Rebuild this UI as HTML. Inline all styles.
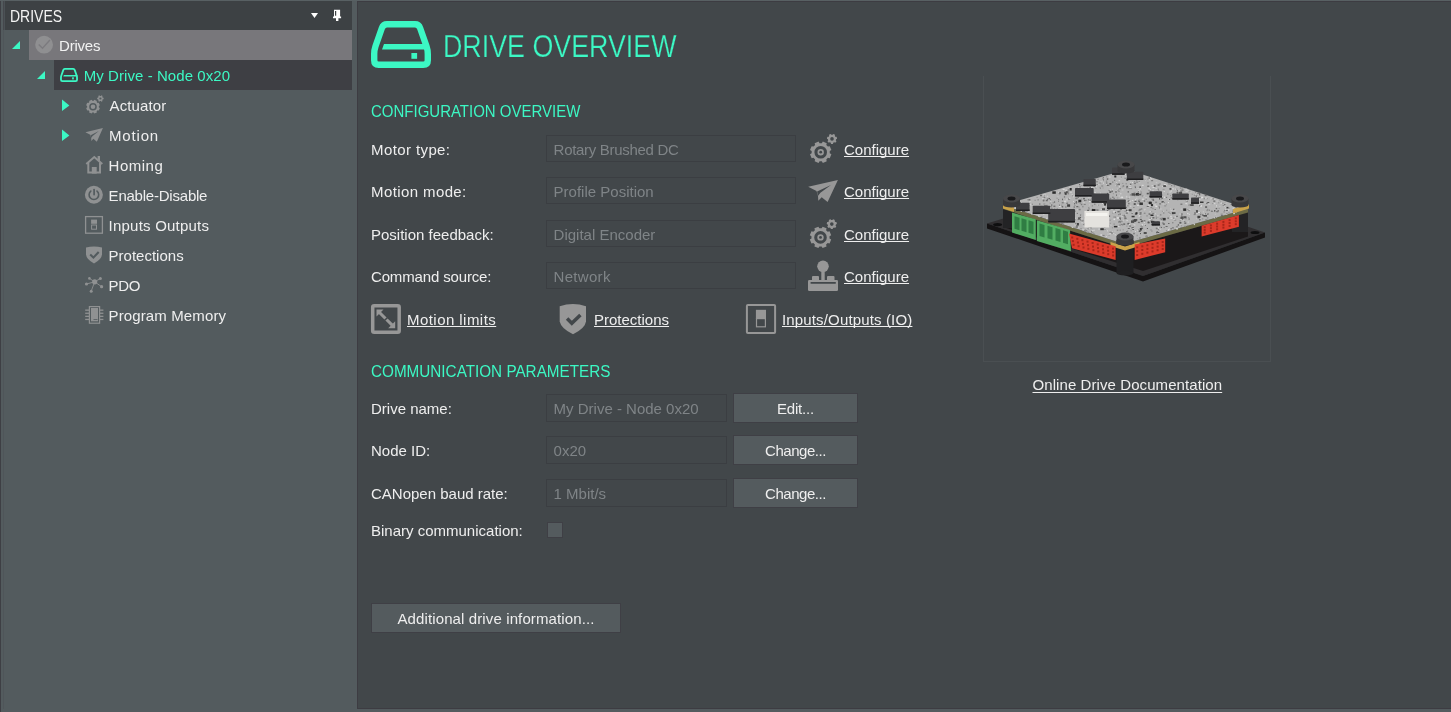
<!DOCTYPE html>
<html><head><meta charset="utf-8">
<style>
html,body{margin:0;padding:0;}
body{-webkit-font-smoothing:antialiased;will-change:transform;width:1451px;height:712px;overflow:hidden;background:#535b5e;position:relative;font-family:"Liberation Sans",sans-serif;font-size:15px;color:#eeeeee;}
.a{position:absolute;}
.t{position:absolute;white-space:pre;line-height:15px;height:15px;}
.teal{color:#3cf8c4;}
.lnk{text-decoration:underline;text-underline-offset:1px;text-decoration-thickness:1px;text-decoration-skip-ink:none;}
.inp{position:absolute;box-sizing:border-box;background:#42474a;border:1px solid #3b3e42;}
.btn{position:absolute;box-sizing:border-box;background:#545b5e;border:1px solid #3f3f45;}
.gray{color:#7f8487;}
</style></head>
<body>
<!-- left edge lines -->
<div class="a" style="left:0;top:0;width:1451px;height:1px;background:#586063"></div>
<div class="a" style="left:0;top:1px;width:1px;height:711px;background:#3e3f44"></div>
<div class="a" style="left:3px;top:30px;width:1px;height:679px;background:#4f5559"></div>

<!-- LEFT PANEL header -->
<div class="a" style="left:3px;top:1px;width:349px;height:29px;background:#3d4144"></div>
<div class="a" style="left:3px;top:1px;width:1px;height:29px;background:#45474c"></div>
<div class="a" style="left:4px;top:1px;width:1px;height:29px;background:#4b5155"></div>
<div class="t" style="left:10px;top:9px;color:#f4f4f4;font-size:15.8px;line-height:15px;height:15px;transform:scaleX(0.885);transform-origin:0 0">DRIVES</div>
<svg class="a" style="left:310px;top:12px" width="9" height="7" viewBox="0 0 9 7"><path d="M1 1 L8 1 L4.5 6 Z" fill="#fff"/></svg>
<svg class="a" style="left:332px;top:9px" width="10" height="13" viewBox="0 0 10 13"><path d="M2 0.8h6.1v6.7h1v1.7h-2.7v2.9h-2.4v-2.9h-3v-1.7h1z" fill="#fff"/><rect x="3" y="2" width="1.2" height="4.7" fill="#3d4144"/></svg>

<!-- tree rows -->
<div class="a" style="left:29px;top:30px;width:323px;height:30px;background:#78777b"></div>
<div class="a" style="left:54px;top:60px;width:298px;height:30px;background:#3e3f44"></div>
<svg class="a" style="left:12px;top:41px" width="8" height="8" viewBox="0 0 8 8"><path d="M8 0 L8 8 L0 8 Z" fill="#3cf8c4"/></svg>
<svg class="a" style="left:37px;top:71px" width="8" height="8" viewBox="0 0 8 8"><path d="M8 0 L8 8 L0 8 Z" fill="#3cf8c4"/></svg>
<svg class="a" style="left:62px;top:99px" width="8" height="12" viewBox="0 0 8 12"><path d="M0 0.6 L7.4 6.5 L0 12 Z" fill="#3cf8c4"/></svg>
<svg class="a" style="left:62px;top:129px" width="8" height="12" viewBox="0 0 8 12"><path d="M0 0.6 L7.4 6.5 L0 12 Z" fill="#3cf8c4"/></svg>
<div class="t" style="left:59px;top:38px;color:#f2f2f2;letter-spacing:-0.2px">Drives</div>
<div class="t teal" style="left:83.7px;top:68px;letter-spacing:0.07px">My Drive - Node 0x20</div>
<div class="t" style="left:109.6px;top:98px;letter-spacing:0.1px">Actuator</div>
<div class="t" style="left:108.9px;top:128px;letter-spacing:0.85px">Motion</div>
<div class="t" style="left:108.6px;top:158px;letter-spacing:0.5px">Homing</div>
<div class="t" style="left:108.6px;top:188px;letter-spacing:-0.22px">Enable-Disable</div>
<div class="t" style="left:108.6px;top:218px;letter-spacing:0.22px">Inputs Outputs</div>
<div class="t" style="left:108.6px;top:248px">Protections</div>
<div class="t" style="left:108.6px;top:278px;letter-spacing:-0.4px">PDO</div>
<div class="t" style="left:108.6px;top:308px;letter-spacing:0.12px">Program Memory</div>

<!-- MAIN PANEL -->
<div class="a" style="left:357px;top:1px;width:1094px;height:708px;background:#42474a;box-sizing:border-box;border-left:1px solid #3d3c42;border-top:1px solid #3d3c42;border-bottom:1px solid #3d3c42"></div>

<div class="t teal" style="left:443px;top:31px;font-size:31px;line-height:31px;height:31px;transform:scaleX(0.865);transform-origin:0 0;-webkit-text-stroke:0.25px #42474a">DRIVE OVERVIEW</div>
<div class="t teal" style="left:371px;top:104px;font-size:16px;line-height:16px;height:16px;transform:scaleX(0.937);transform-origin:0 0">CONFIGURATION OVERVIEW</div>

<div class="t" style="left:371px;top:142px;letter-spacing:0.4px">Motor type:</div>
<div class="t" style="left:371px;top:184px;letter-spacing:0.4px">Motion mode:</div>
<div class="t" style="left:371px;top:227px">Position feedback:</div>
<div class="t" style="left:371px;top:269px;letter-spacing:-0.15px">Command source:</div>

<div class="inp" style="left:546px;top:135px;width:250px;height:27px"></div>
<div class="inp" style="left:546px;top:177px;width:250px;height:27px"></div>
<div class="inp" style="left:546px;top:220px;width:250px;height:27px"></div>
<div class="inp" style="left:546px;top:262px;width:250px;height:27px"></div>
<div class="t gray" style="left:553.6px;top:142px;letter-spacing:-0.3px">Rotary Brushed DC</div>
<div class="t gray" style="left:553.6px;top:184px">Profile Position</div>
<div class="t gray" style="left:553.6px;top:227px">Digital Encoder</div>
<div class="t gray" style="left:553.6px;top:269px;letter-spacing:0.3px">Network</div>

<div class="t lnk" style="left:844px;top:142px">Configure</div>
<div class="t lnk" style="left:844px;top:184px">Configure</div>
<div class="t lnk" style="left:844px;top:227px">Configure</div>
<div class="t lnk" style="left:844px;top:269px">Configure</div>

<div class="t lnk" style="left:407px;top:312px;letter-spacing:0.45px">Motion limits</div>
<div class="t lnk" style="left:594px;top:312px">Protections</div>
<div class="t lnk" style="left:782px;top:312px;letter-spacing:0.15px">Inputs/Outputs (IO)</div>

<div class="t teal" style="left:371px;top:364px;font-size:16px;line-height:16px;height:16px;transform:scaleX(0.954);transform-origin:0 0">COMMUNICATION PARAMETERS</div>
<div class="t" style="left:371px;top:401px">Drive name:</div>
<div class="t" style="left:371px;top:443px">Node ID:</div>
<div class="t" style="left:371px;top:486px">CANopen baud rate:</div>
<div class="t" style="left:371px;top:523px">Binary communication:</div>

<div class="inp" style="left:546px;top:394px;width:181px;height:28px"></div>
<div class="inp" style="left:546px;top:436px;width:181px;height:28px"></div>
<div class="inp" style="left:546px;top:479px;width:181px;height:28px"></div>
<div class="t gray" style="left:553.6px;top:401px">My Drive - Node 0x20</div>
<div class="t gray" style="left:553.6px;top:443px">0x20</div>
<div class="t gray" style="left:553.6px;top:486px">1 Mbit/s</div>

<div class="btn" style="left:733px;top:393px;width:125px;height:30px"></div>
<div class="btn" style="left:733px;top:435px;width:125px;height:30px"></div>
<div class="btn" style="left:733px;top:478px;width:125px;height:30px"></div>
<div class="t" style="left:733px;top:401px;width:125px;text-align:center;letter-spacing:-0.2px">Edit...</div>
<div class="t" style="left:733px;top:443px;width:125px;text-align:center;letter-spacing:-0.45px">Change...</div>
<div class="t" style="left:733px;top:486px;width:125px;text-align:center;letter-spacing:-0.45px">Change...</div>

<div class="a" style="left:547px;top:522px;width:16px;height:16px;background:#545b5e;box-sizing:border-box;border:1.5px solid #3f3f45"></div>

<div class="btn" style="left:371px;top:603px;width:250px;height:30px"></div>
<div class="t" style="left:371px;top:611px;width:250px;text-align:center;letter-spacing:0.12px">Additional drive information...</div>

<div class="a" style="left:983px;top:76px;width:288px;height:286px;box-sizing:border-box;border:1px solid #4a4f52;border-top:none"></div>
<div class="t lnk" style="left:1032.5px;top:377px;text-underline-offset:2px;letter-spacing:0.08px">Online Drive Documentation</div>

<svg class="a" style="left:0;top:0" width="1451" height="712" viewBox="0 0 1451 712">
<polygon points="987,223.5 1118,183 1265,232.5 1143,276" fill="#302e30"/>
<polygon points="987,223.5 1143,276 1265,232.5 1265,237.5 1143,281.5 987,228.5" fill="#151314"/>
<ellipse cx="997.6" cy="224.6" rx="4.5" ry="1.6" fill="#0e0e0f"/>
<ellipse cx="1255" cy="232.5" rx="4.5" ry="1.6" fill="#0e0e0f"/>
<polygon points="1003.0,209.0 1124.0,248.0 1248.0,212.5 1248.0,236.5 1143,271 1003.0,227.0" fill="#1b1819"/>
<rect x="1003" y="199" width="16" height="29" fill="#232325"/>
<rect x="1232" y="199" width="16" height="33" fill="#232325"/>
<polygon points="1003.0,205.0 1124.0,244.0 1248.0,208.5 1248.0,212.5 1124.0,248.0 1003.0,209.0" fill="#6b6a45"/>
<polygon points="1003.0,205.0 1127.0,169.5 1248.0,208.5 1124.0,244.0" fill="#b4b4b4"/>
<rect x="1126.8" y="210.8" width="2" height="1.5" fill="rgb(220,220,220)"/>
<rect x="1132.0" y="182.1" width="1" height="1" fill="rgb(220,220,220)"/>
<rect x="1075.5" y="194.7" width="2" height="1" fill="rgb(85,85,85)"/>
<rect x="1158.6" y="205.8" width="1" height="1.5" fill="rgb(125,125,125)"/>
<rect x="1015.1" y="204.1" width="1" height="1" fill="rgb(140,140,140)"/>
<rect x="1115.0" y="216.5" width="1" height="1.5" fill="rgb(140,140,140)"/>
<rect x="1040.0" y="194.7" width="2" height="1.5" fill="rgb(105,105,105)"/>
<rect x="1158.2" y="234.0" width="1.5" height="1" fill="rgb(105,105,105)"/>
<rect x="1159.0" y="198.1" width="1" height="1.5" fill="rgb(85,85,85)"/>
<rect x="1146.5" y="193.4" width="2" height="1" fill="rgb(150,150,150)"/>
<rect x="1224.3" y="204.0" width="1" height="1" fill="rgb(85,85,85)"/>
<rect x="1124.3" y="174.1" width="2" height="1" fill="rgb(210,210,210)"/>
<rect x="1088.2" y="227.0" width="1.5" height="1" fill="rgb(150,150,150)"/>
<rect x="1043.4" y="194.5" width="1" height="1" fill="rgb(210,210,210)"/>
<rect x="1045.8" y="200.2" width="2" height="1" fill="rgb(85,85,85)"/>
<rect x="1092.7" y="220.5" width="1" height="1.5" fill="rgb(220,220,220)"/>
<rect x="1149.1" y="194.0" width="1" height="1" fill="rgb(210,210,210)"/>
<rect x="1080.9" y="198.4" width="1.5" height="1" fill="rgb(150,150,150)"/>
<rect x="1076.8" y="212.9" width="1" height="1" fill="rgb(105,105,105)"/>
<rect x="1060.7" y="207.5" width="1.5" height="1" fill="rgb(200,200,200)"/>
<rect x="1023.0" y="205.9" width="1" height="1.5" fill="rgb(140,140,140)"/>
<rect x="1124.0" y="216.2" width="2" height="1.5" fill="rgb(125,125,125)"/>
<rect x="1066.5" y="215.2" width="1.5" height="1" fill="rgb(125,125,125)"/>
<rect x="1134.6" y="185.7" width="1" height="1.5" fill="rgb(140,140,140)"/>
<rect x="1148.0" y="204.3" width="2" height="1.5" fill="rgb(210,210,210)"/>
<rect x="1018.5" y="204.1" width="1" height="1.5" fill="rgb(105,105,105)"/>
<rect x="1151.2" y="180.1" width="1.5" height="1" fill="rgb(210,210,210)"/>
<rect x="1177.3" y="199.0" width="1" height="1.5" fill="rgb(150,150,150)"/>
<rect x="1139.5" y="175.2" width="1" height="1" fill="rgb(220,220,220)"/>
<rect x="1140.0" y="233.1" width="1" height="1" fill="rgb(85,85,85)"/>
<rect x="1084.2" y="200.1" width="1" height="1" fill="rgb(85,85,85)"/>
<rect x="1118.0" y="214.2" width="1" height="1" fill="rgb(125,125,125)"/>
<rect x="1074.7" y="217.6" width="1" height="1.5" fill="rgb(200,200,200)"/>
<rect x="1009.5" y="204.5" width="1.5" height="1" fill="rgb(200,200,200)"/>
<rect x="1082.6" y="229.1" width="1" height="1.5" fill="rgb(220,220,220)"/>
<rect x="1058.1" y="199.3" width="1" height="1" fill="rgb(105,105,105)"/>
<rect x="1159.9" y="214.4" width="1.5" height="1" fill="rgb(125,125,125)"/>
<rect x="1070.8" y="220.4" width="2" height="1" fill="rgb(105,105,105)"/>
<rect x="1179.4" y="196.7" width="2" height="1.5" fill="rgb(210,210,210)"/>
<rect x="1013.3" y="207.4" width="1" height="1" fill="rgb(105,105,105)"/>
<rect x="1200.2" y="202.2" width="2" height="1" fill="rgb(210,210,210)"/>
<rect x="1125.9" y="209.7" width="1.5" height="1.5" fill="rgb(85,85,85)"/>
<rect x="1016.6" y="202.8" width="2" height="1.5" fill="rgb(105,105,105)"/>
<rect x="1143.7" y="200.5" width="1.5" height="1" fill="rgb(85,85,85)"/>
<rect x="1094.8" y="223.8" width="1.5" height="1.5" fill="rgb(125,125,125)"/>
<rect x="1178.7" y="191.4" width="1.5" height="1" fill="rgb(140,140,140)"/>
<rect x="1109.6" y="189.1" width="1" height="1" fill="rgb(210,210,210)"/>
<rect x="1121.2" y="214.1" width="1" height="1" fill="rgb(200,200,200)"/>
<rect x="1062.1" y="213.9" width="1" height="1" fill="rgb(85,85,85)"/>
<rect x="1118.6" y="180.2" width="1.5" height="1" fill="rgb(220,220,220)"/>
<rect x="1152.3" y="190.4" width="1.5" height="1.5" fill="rgb(220,220,220)"/>
<rect x="1225.9" y="213.5" width="1.5" height="1" fill="rgb(220,220,220)"/>
<rect x="1139.4" y="186.4" width="1.5" height="1.5" fill="rgb(85,85,85)"/>
<rect x="1125.5" y="217.7" width="1" height="1" fill="rgb(85,85,85)"/>
<rect x="1062.4" y="189.8" width="1" height="1" fill="rgb(150,150,150)"/>
<rect x="1220.9" y="215.1" width="2" height="1" fill="rgb(105,105,105)"/>
<rect x="1160.4" y="208.2" width="1" height="1.5" fill="rgb(200,200,200)"/>
<rect x="1127.2" y="230.1" width="1" height="1.5" fill="rgb(150,150,150)"/>
<rect x="1061.5" y="223.0" width="1" height="1" fill="rgb(85,85,85)"/>
<rect x="1078.6" y="208.8" width="2" height="1.5" fill="rgb(125,125,125)"/>
<rect x="1125.9" y="176.2" width="1" height="1" fill="rgb(210,210,210)"/>
<rect x="1134.9" y="213.3" width="2" height="1.5" fill="rgb(85,85,85)"/>
<rect x="1179.9" y="219.1" width="2" height="1" fill="rgb(200,200,200)"/>
<rect x="1108.6" y="189.9" width="1" height="1" fill="rgb(105,105,105)"/>
<rect x="1233.2" y="211.3" width="1.5" height="1" fill="rgb(150,150,150)"/>
<rect x="1219.4" y="206.1" width="1" height="1" fill="rgb(200,200,200)"/>
<rect x="1124.3" y="210.8" width="2" height="1" fill="rgb(150,150,150)"/>
<rect x="1135.0" y="231.1" width="1" height="1" fill="rgb(210,210,210)"/>
<rect x="1152.2" y="212.9" width="2" height="1" fill="rgb(125,125,125)"/>
<rect x="1235.9" y="204.6" width="2" height="1.5" fill="rgb(220,220,220)"/>
<rect x="1131.1" y="174.7" width="2" height="1.5" fill="rgb(140,140,140)"/>
<rect x="1172.9" y="217.6" width="1.5" height="1" fill="rgb(125,125,125)"/>
<rect x="1201.8" y="218.4" width="1.5" height="1" fill="rgb(140,140,140)"/>
<rect x="1186.5" y="191.1" width="1" height="1" fill="rgb(220,220,220)"/>
<rect x="1130.3" y="205.6" width="1" height="1.5" fill="rgb(210,210,210)"/>
<rect x="1185.6" y="190.7" width="1" height="1" fill="rgb(210,210,210)"/>
<rect x="1034.7" y="208.2" width="2" height="1" fill="rgb(220,220,220)"/>
<rect x="1093.6" y="213.9" width="1.5" height="1" fill="rgb(125,125,125)"/>
<rect x="1227.9" y="209.5" width="1.5" height="1" fill="rgb(220,220,220)"/>
<rect x="1101.5" y="222.3" width="1" height="1.5" fill="rgb(150,150,150)"/>
<rect x="1102.4" y="178.2" width="1" height="1" fill="rgb(140,140,140)"/>
<rect x="1038.8" y="215.7" width="1" height="1.5" fill="rgb(200,200,200)"/>
<rect x="1125.3" y="206.8" width="1.5" height="1.5" fill="rgb(105,105,105)"/>
<rect x="1091.7" y="218.7" width="1" height="1" fill="rgb(210,210,210)"/>
<rect x="1181.3" y="214.7" width="1" height="1.5" fill="rgb(125,125,125)"/>
<rect x="1095.6" y="194.6" width="1" height="1" fill="rgb(140,140,140)"/>
<rect x="1192.4" y="197.0" width="1" height="1" fill="rgb(200,200,200)"/>
<rect x="1185.6" y="218.3" width="1" height="1" fill="rgb(140,140,140)"/>
<rect x="1129.3" y="178.7" width="1" height="1.5" fill="rgb(140,140,140)"/>
<rect x="1060.9" y="217.0" width="2" height="1.5" fill="rgb(210,210,210)"/>
<rect x="1116.2" y="181.9" width="1" height="1" fill="rgb(210,210,210)"/>
<rect x="1110.5" y="224.5" width="1" height="1.5" fill="rgb(200,200,200)"/>
<rect x="1157.4" y="216.6" width="1" height="1" fill="rgb(140,140,140)"/>
<rect x="1020.7" y="202.7" width="1" height="1" fill="rgb(220,220,220)"/>
<rect x="1050.6" y="206.4" width="1.5" height="1.5" fill="rgb(125,125,125)"/>
<rect x="1022.3" y="204.0" width="1" height="1" fill="rgb(220,220,220)"/>
<rect x="1100.0" y="211.6" width="2" height="1" fill="rgb(200,200,200)"/>
<rect x="1079.1" y="184.2" width="1" height="1" fill="rgb(85,85,85)"/>
<rect x="1097.1" y="204.5" width="2" height="1" fill="rgb(200,200,200)"/>
<rect x="1089.5" y="187.2" width="1.5" height="1" fill="rgb(85,85,85)"/>
<rect x="1187.7" y="204.0" width="1" height="1.5" fill="rgb(210,210,210)"/>
<rect x="1116.8" y="197.5" width="1.5" height="1" fill="rgb(150,150,150)"/>
<rect x="1189.4" y="208.9" width="1" height="1" fill="rgb(210,210,210)"/>
<rect x="1196.2" y="200.9" width="1" height="1" fill="rgb(210,210,210)"/>
<rect x="1051.0" y="204.9" width="1.5" height="1" fill="rgb(200,200,200)"/>
<rect x="1123.0" y="236.1" width="1" height="1" fill="rgb(85,85,85)"/>
<rect x="1200.7" y="197.4" width="1" height="1.5" fill="rgb(200,200,200)"/>
<rect x="1075.4" y="197.7" width="2" height="1.5" fill="rgb(105,105,105)"/>
<rect x="1204.7" y="194.6" width="2" height="1.5" fill="rgb(105,105,105)"/>
<rect x="1080.3" y="228.2" width="1.5" height="1" fill="rgb(140,140,140)"/>
<rect x="1058.9" y="192.7" width="2" height="1" fill="rgb(140,140,140)"/>
<rect x="1045.6" y="211.3" width="2" height="1.5" fill="rgb(200,200,200)"/>
<rect x="1193.8" y="223.6" width="1" height="1.5" fill="rgb(220,220,220)"/>
<rect x="1169.0" y="213.4" width="2" height="1" fill="rgb(85,85,85)"/>
<rect x="1168.2" y="229.1" width="1" height="1" fill="rgb(220,220,220)"/>
<rect x="1171.1" y="187.9" width="1.5" height="1" fill="rgb(210,210,210)"/>
<rect x="1127.2" y="205.0" width="1.5" height="1.5" fill="rgb(150,150,150)"/>
<rect x="1127.7" y="191.1" width="1" height="1.5" fill="rgb(85,85,85)"/>
<rect x="1027.3" y="209.6" width="1" height="1" fill="rgb(210,210,210)"/>
<rect x="1101.9" y="180.4" width="1" height="1" fill="rgb(200,200,200)"/>
<rect x="1114.1" y="208.4" width="1" height="1.5" fill="rgb(140,140,140)"/>
<rect x="1113.2" y="233.1" width="1" height="1" fill="rgb(220,220,220)"/>
<rect x="1091.8" y="188.1" width="2" height="1" fill="rgb(210,210,210)"/>
<rect x="1034.6" y="199.8" width="1" height="1" fill="rgb(125,125,125)"/>
<rect x="1138.7" y="215.3" width="1.5" height="1.5" fill="rgb(220,220,220)"/>
<rect x="1126.0" y="200.7" width="1.5" height="1.5" fill="rgb(125,125,125)"/>
<rect x="1077.2" y="219.2" width="1.5" height="1" fill="rgb(150,150,150)"/>
<rect x="1119.6" y="222.1" width="1.5" height="1" fill="rgb(140,140,140)"/>
<rect x="1056.7" y="208.0" width="1" height="1.5" fill="rgb(140,140,140)"/>
<rect x="1043.3" y="213.4" width="1" height="1.5" fill="rgb(210,210,210)"/>
<rect x="1034.6" y="212.3" width="1" height="1" fill="rgb(150,150,150)"/>
<rect x="1135.7" y="178.9" width="1.5" height="1" fill="rgb(140,140,140)"/>
<rect x="1087.8" y="196.2" width="2" height="1.5" fill="rgb(200,200,200)"/>
<rect x="1124.8" y="234.2" width="2" height="1.5" fill="rgb(105,105,105)"/>
<rect x="1200.0" y="205.2" width="2" height="1.5" fill="rgb(220,220,220)"/>
<rect x="1133.0" y="227.4" width="1" height="1.5" fill="rgb(200,200,200)"/>
<rect x="1178.9" y="198.6" width="1" height="1" fill="rgb(150,150,150)"/>
<rect x="1154.3" y="204.4" width="1.5" height="1" fill="rgb(220,220,220)"/>
<rect x="1122.7" y="202.5" width="2" height="1" fill="rgb(220,220,220)"/>
<rect x="1106.2" y="176.1" width="1" height="1.5" fill="rgb(150,150,150)"/>
<rect x="1162.0" y="210.7" width="1.5" height="1" fill="rgb(220,220,220)"/>
<rect x="1138.8" y="182.2" width="1.5" height="1" fill="rgb(200,200,200)"/>
<rect x="1096.3" y="210.8" width="2" height="1.5" fill="rgb(150,150,150)"/>
<rect x="1139.5" y="188.4" width="1" height="1" fill="rgb(200,200,200)"/>
<rect x="1211.3" y="199.1" width="1" height="1" fill="rgb(140,140,140)"/>
<rect x="1108.7" y="176.5" width="2" height="1" fill="rgb(210,210,210)"/>
<rect x="1139.2" y="193.1" width="1" height="1.5" fill="rgb(210,210,210)"/>
<rect x="1094.2" y="191.9" width="1.5" height="1" fill="rgb(220,220,220)"/>
<rect x="1037.4" y="199.4" width="1.5" height="1" fill="rgb(125,125,125)"/>
<rect x="1181.1" y="213.3" width="1.5" height="1.5" fill="rgb(105,105,105)"/>
<rect x="1023.3" y="205.2" width="1.5" height="1" fill="rgb(105,105,105)"/>
<rect x="1085.3" y="229.6" width="2" height="1" fill="rgb(105,105,105)"/>
<rect x="1150.5" y="198.8" width="2" height="1" fill="rgb(200,200,200)"/>
<rect x="1144.1" y="224.0" width="1" height="1" fill="rgb(200,200,200)"/>
<rect x="1160.9" y="219.1" width="1" height="1" fill="rgb(105,105,105)"/>
<rect x="1216.1" y="216.6" width="1" height="1" fill="rgb(200,200,200)"/>
<rect x="1213.9" y="210.1" width="1.5" height="1.5" fill="rgb(85,85,85)"/>
<rect x="1017.6" y="208.9" width="1" height="1" fill="rgb(210,210,210)"/>
<rect x="1214.8" y="217.3" width="1" height="1" fill="rgb(210,210,210)"/>
<rect x="1079.8" y="214.3" width="1.5" height="1" fill="rgb(150,150,150)"/>
<rect x="1149.9" y="216.8" width="1" height="1" fill="rgb(150,150,150)"/>
<rect x="1207.2" y="202.0" width="2" height="1" fill="rgb(85,85,85)"/>
<rect x="1065.7" y="201.6" width="1" height="1.5" fill="rgb(200,200,200)"/>
<rect x="1119.0" y="224.6" width="2" height="1" fill="rgb(140,140,140)"/>
<rect x="1162.6" y="188.9" width="2" height="1" fill="rgb(150,150,150)"/>
<rect x="1111.8" y="203.5" width="1" height="1" fill="rgb(200,200,200)"/>
<rect x="1158.3" y="190.0" width="1" height="1" fill="rgb(140,140,140)"/>
<rect x="1220.2" y="201.3" width="1" height="1.5" fill="rgb(150,150,150)"/>
<rect x="1225.6" y="207.0" width="1.5" height="1" fill="rgb(220,220,220)"/>
<rect x="1188.1" y="204.5" width="2" height="1" fill="rgb(125,125,125)"/>
<rect x="1116.2" y="183.2" width="1.5" height="1.5" fill="rgb(125,125,125)"/>
<rect x="1087.5" y="191.9" width="1" height="1" fill="rgb(125,125,125)"/>
<rect x="1207.2" y="208.8" width="1" height="1" fill="rgb(125,125,125)"/>
<rect x="1123.2" y="223.4" width="2" height="1.5" fill="rgb(105,105,105)"/>
<rect x="1176.7" y="225.6" width="1" height="1" fill="rgb(150,150,150)"/>
<rect x="1165.6" y="226.0" width="2" height="1" fill="rgb(105,105,105)"/>
<rect x="1057.6" y="219.8" width="1" height="1" fill="rgb(220,220,220)"/>
<rect x="1091.3" y="209.6" width="2" height="1.5" fill="rgb(150,150,150)"/>
<rect x="1135.2" y="193.6" width="1" height="1.5" fill="rgb(125,125,125)"/>
<rect x="1107.8" y="209.0" width="2" height="1" fill="rgb(105,105,105)"/>
<rect x="1196.2" y="202.1" width="1" height="1" fill="rgb(220,220,220)"/>
<rect x="1128.4" y="202.8" width="1" height="1.5" fill="rgb(85,85,85)"/>
<rect x="1097.8" y="224.1" width="1.5" height="1" fill="rgb(150,150,150)"/>
<rect x="1082.4" y="188.7" width="1" height="1" fill="rgb(140,140,140)"/>
<rect x="1133.6" y="191.9" width="2" height="1.5" fill="rgb(150,150,150)"/>
<rect x="1136.5" y="199.7" width="1" height="1" fill="rgb(210,210,210)"/>
<rect x="1031.9" y="203.7" width="1" height="1" fill="rgb(125,125,125)"/>
<rect x="1154.1" y="223.4" width="1" height="1" fill="rgb(105,105,105)"/>
<rect x="1126.5" y="242.4" width="2" height="1" fill="rgb(210,210,210)"/>
<rect x="1145.0" y="225.0" width="1" height="1" fill="rgb(125,125,125)"/>
<rect x="1151.5" y="190.9" width="2" height="1.5" fill="rgb(200,200,200)"/>
<rect x="1053.4" y="220.1" width="1" height="1.5" fill="rgb(200,200,200)"/>
<rect x="1189.3" y="190.7" width="1.5" height="1" fill="rgb(150,150,150)"/>
<rect x="1124.2" y="218.2" width="2" height="1" fill="rgb(105,105,105)"/>
<rect x="1161.6" y="217.7" width="1" height="1" fill="rgb(105,105,105)"/>
<rect x="1207.3" y="213.0" width="1.5" height="1.5" fill="rgb(140,140,140)"/>
<rect x="1082.2" y="192.8" width="1" height="1.5" fill="rgb(140,140,140)"/>
<rect x="1196.0" y="195.9" width="1" height="1" fill="rgb(140,140,140)"/>
<rect x="1103.1" y="218.8" width="1.5" height="1" fill="rgb(200,200,200)"/>
<rect x="1161.9" y="186.1" width="1" height="1" fill="rgb(220,220,220)"/>
<rect x="1140.1" y="175.7" width="1.5" height="1" fill="rgb(105,105,105)"/>
<rect x="1235.8" y="211.4" width="1" height="1" fill="rgb(200,200,200)"/>
<rect x="1119.3" y="172.0" width="1" height="1.5" fill="rgb(200,200,200)"/>
<rect x="1068.1" y="198.6" width="2" height="1" fill="rgb(105,105,105)"/>
<rect x="1147.7" y="221.2" width="1.5" height="1.5" fill="rgb(125,125,125)"/>
<rect x="1217.8" y="210.3" width="1" height="1" fill="rgb(85,85,85)"/>
<rect x="1058.1" y="191.7" width="1" height="1.5" fill="rgb(210,210,210)"/>
<rect x="1094.0" y="203.7" width="1.5" height="1" fill="rgb(125,125,125)"/>
<rect x="1113.6" y="197.8" width="1" height="1" fill="rgb(85,85,85)"/>
<rect x="1194.6" y="194.3" width="1.5" height="1" fill="rgb(220,220,220)"/>
<rect x="1224.7" y="208.8" width="1.5" height="1" fill="rgb(210,210,210)"/>
<rect x="1169.3" y="191.5" width="2" height="1" fill="rgb(210,210,210)"/>
<rect x="1182.7" y="220.2" width="2" height="1" fill="rgb(200,200,200)"/>
<rect x="1153.9" y="185.4" width="1.5" height="1.5" fill="rgb(85,85,85)"/>
<rect x="1131.8" y="200.0" width="1.5" height="1" fill="rgb(210,210,210)"/>
<rect x="1218.6" y="207.9" width="1" height="1" fill="rgb(140,140,140)"/>
<rect x="1138.7" y="230.4" width="2" height="1.5" fill="rgb(85,85,85)"/>
<rect x="1126.2" y="236.7" width="2" height="1" fill="rgb(150,150,150)"/>
<rect x="1233.0" y="212.7" width="2" height="1.5" fill="rgb(200,200,200)"/>
<rect x="1129.7" y="185.1" width="1" height="1" fill="rgb(210,210,210)"/>
<rect x="1111.1" y="232.4" width="2" height="1" fill="rgb(105,105,105)"/>
<rect x="1127.8" y="222.9" width="1.5" height="1" fill="rgb(85,85,85)"/>
<rect x="1119.1" y="237.7" width="1" height="1" fill="rgb(210,210,210)"/>
<rect x="1116.8" y="189.4" width="1" height="1" fill="rgb(150,150,150)"/>
<rect x="1151.7" y="185.1" width="1" height="1" fill="rgb(220,220,220)"/>
<rect x="1136.5" y="181.7" width="1" height="1" fill="rgb(85,85,85)"/>
<rect x="1149.8" y="189.1" width="1" height="1" fill="rgb(220,220,220)"/>
<rect x="1166.2" y="209.7" width="1" height="1" fill="rgb(140,140,140)"/>
<rect x="1238.9" y="209.4" width="1.5" height="1.5" fill="rgb(105,105,105)"/>
<rect x="1220.7" y="213.5" width="2" height="1.5" fill="rgb(150,150,150)"/>
<rect x="1152.5" y="186.9" width="2" height="1" fill="rgb(220,220,220)"/>
<rect x="1128.3" y="232.6" width="1" height="1" fill="rgb(105,105,105)"/>
<rect x="1053.9" y="207.8" width="1.5" height="1" fill="rgb(150,150,150)"/>
<rect x="1166.1" y="196.9" width="1" height="1" fill="rgb(105,105,105)"/>
<rect x="1135.9" y="180.3" width="1.5" height="1" fill="rgb(140,140,140)"/>
<rect x="1093.2" y="185.8" width="2" height="1.5" fill="rgb(105,105,105)"/>
<rect x="1121.9" y="237.8" width="1.5" height="1.5" fill="rgb(85,85,85)"/>
<rect x="1131.3" y="227.4" width="1" height="1" fill="rgb(105,105,105)"/>
<rect x="1148.5" y="177.3" width="1.5" height="1.5" fill="rgb(125,125,125)"/>
<rect x="1093.5" y="192.8" width="1" height="1.5" fill="rgb(125,125,125)"/>
<rect x="1151.1" y="217.9" width="1" height="1" fill="rgb(210,210,210)"/>
<rect x="1018.2" y="205.4" width="1.5" height="1.5" fill="rgb(200,200,200)"/>
<rect x="1066.8" y="189.1" width="1" height="1.5" fill="rgb(150,150,150)"/>
<rect x="1119.7" y="183.8" width="1" height="1.5" fill="rgb(210,210,210)"/>
<rect x="1151.2" y="219.5" width="1.5" height="1" fill="rgb(140,140,140)"/>
<rect x="1173.6" y="218.9" width="1.5" height="1" fill="rgb(220,220,220)"/>
<rect x="1145.6" y="235.7" width="2" height="1" fill="rgb(85,85,85)"/>
<rect x="1116.9" y="217.2" width="2" height="1.5" fill="rgb(220,220,220)"/>
<rect x="1089.6" y="199.6" width="1" height="1" fill="rgb(85,85,85)"/>
<rect x="1184.3" y="195.0" width="1" height="1" fill="rgb(140,140,140)"/>
<rect x="1046.7" y="195.6" width="1.5" height="1.5" fill="rgb(200,200,200)"/>
<rect x="1143.5" y="212.7" width="2" height="1" fill="rgb(125,125,125)"/>
<rect x="1093.9" y="215.6" width="1" height="1" fill="rgb(220,220,220)"/>
<rect x="1098.0" y="204.6" width="1" height="1" fill="rgb(140,140,140)"/>
<rect x="1155.8" y="217.3" width="1" height="1.5" fill="rgb(125,125,125)"/>
<rect x="1149.6" y="217.9" width="1" height="1" fill="rgb(85,85,85)"/>
<rect x="1117.4" y="210.9" width="2" height="1.5" fill="rgb(105,105,105)"/>
<rect x="1091.3" y="211.0" width="1" height="1.5" fill="rgb(105,105,105)"/>
<rect x="1218.9" y="199.4" width="1.5" height="1" fill="rgb(140,140,140)"/>
<rect x="1121.2" y="234.1" width="2" height="1" fill="rgb(210,210,210)"/>
<rect x="1162.7" y="186.1" width="1" height="1" fill="rgb(200,200,200)"/>
<rect x="1093.7" y="222.1" width="1.5" height="1.5" fill="rgb(85,85,85)"/>
<rect x="1193.7" y="214.1" width="2" height="1" fill="rgb(125,125,125)"/>
<rect x="1144.8" y="180.1" width="1" height="1" fill="rgb(210,210,210)"/>
<rect x="1084.7" y="199.8" width="2" height="1" fill="rgb(125,125,125)"/>
<rect x="1124.5" y="214.0" width="2" height="1" fill="rgb(150,150,150)"/>
<rect x="1139.6" y="212.0" width="2" height="1" fill="rgb(125,125,125)"/>
<rect x="1120.7" y="202.2" width="1.5" height="1" fill="rgb(85,85,85)"/>
<rect x="1195.8" y="195.5" width="1.5" height="1.5" fill="rgb(125,125,125)"/>
<rect x="1163.5" y="227.1" width="1.5" height="1" fill="rgb(140,140,140)"/>
<rect x="1066.4" y="198.2" width="1" height="1" fill="rgb(200,200,200)"/>
<rect x="1202.5" y="214.7" width="1.5" height="1" fill="rgb(85,85,85)"/>
<rect x="1162.2" y="222.4" width="1.5" height="1" fill="rgb(210,210,210)"/>
<rect x="1161.4" y="197.9" width="1.5" height="1" fill="rgb(85,85,85)"/>
<rect x="1137.5" y="202.5" width="1" height="1.5" fill="rgb(140,140,140)"/>
<rect x="1080.7" y="185.1" width="2" height="1" fill="rgb(150,150,150)"/>
<rect x="1146.3" y="215.1" width="1.5" height="1.5" fill="rgb(150,150,150)"/>
<rect x="1104.6" y="203.7" width="1.5" height="1.5" fill="rgb(140,140,140)"/>
<rect x="1140.4" y="195.5" width="1.5" height="1" fill="rgb(210,210,210)"/>
<rect x="1060.6" y="215.8" width="1" height="1" fill="rgb(140,140,140)"/>
<rect x="1198.6" y="204.0" width="1" height="1.5" fill="rgb(220,220,220)"/>
<rect x="1121.1" y="220.6" width="1.5" height="1.5" fill="rgb(140,140,140)"/>
<rect x="1111.9" y="230.9" width="1" height="1.5" fill="rgb(200,200,200)"/>
<rect x="1131.9" y="227.0" width="2" height="1" fill="rgb(105,105,105)"/>
<rect x="1056.8" y="217.8" width="1.5" height="1" fill="rgb(200,200,200)"/>
<rect x="1117.0" y="188.7" width="1" height="1" fill="rgb(210,210,210)"/>
<rect x="1140.7" y="191.4" width="1" height="1.5" fill="rgb(140,140,140)"/>
<rect x="1096.5" y="209.3" width="2" height="1.5" fill="rgb(125,125,125)"/>
<rect x="1138.1" y="229.1" width="1" height="1" fill="rgb(150,150,150)"/>
<rect x="1128.0" y="236.2" width="1.5" height="1" fill="rgb(210,210,210)"/>
<rect x="1152.2" y="224.6" width="2" height="1.5" fill="rgb(150,150,150)"/>
<rect x="1074.0" y="203.3" width="1" height="1" fill="rgb(85,85,85)"/>
<rect x="1088.3" y="208.1" width="1.5" height="1.5" fill="rgb(150,150,150)"/>
<rect x="1190.7" y="198.6" width="1.5" height="1" fill="rgb(210,210,210)"/>
<rect x="1092.4" y="231.5" width="1" height="1.5" fill="rgb(140,140,140)"/>
<rect x="1074.6" y="224.5" width="1" height="1" fill="rgb(210,210,210)"/>
<rect x="1067.6" y="220.7" width="2" height="1" fill="rgb(220,220,220)"/>
<rect x="1024.2" y="208.9" width="1.5" height="1" fill="rgb(150,150,150)"/>
<rect x="1165.9" y="230.3" width="1" height="1" fill="rgb(125,125,125)"/>
<rect x="1113.6" y="223.4" width="1" height="1.5" fill="rgb(140,140,140)"/>
<rect x="1124.9" y="170.4" width="1" height="1.5" fill="rgb(220,220,220)"/>
<rect x="1212.1" y="210.2" width="1.5" height="1" fill="rgb(200,200,200)"/>
<rect x="1018.2" y="202.1" width="2" height="1.5" fill="rgb(140,140,140)"/>
<rect x="1045.7" y="206.9" width="1" height="1" fill="rgb(125,125,125)"/>
<rect x="1139.4" y="202.1" width="1.5" height="1" fill="rgb(150,150,150)"/>
<rect x="1129.1" y="224.1" width="1" height="1.5" fill="rgb(220,220,220)"/>
<rect x="1073.2" y="208.8" width="1" height="1" fill="rgb(125,125,125)"/>
<rect x="1224.6" y="201.8" width="1" height="1" fill="rgb(150,150,150)"/>
<rect x="1148.7" y="213.3" width="1" height="1.5" fill="rgb(85,85,85)"/>
<rect x="1215.7" y="208.2" width="1.5" height="1" fill="rgb(85,85,85)"/>
<rect x="1141.8" y="219.7" width="1.5" height="1.5" fill="rgb(210,210,210)"/>
<rect x="1126.2" y="196.8" width="1" height="1" fill="rgb(200,200,200)"/>
<rect x="1133.9" y="182.6" width="2" height="1.5" fill="rgb(125,125,125)"/>
<rect x="1166.0" y="204.2" width="1" height="1" fill="rgb(150,150,150)"/>
<rect x="1103.1" y="222.1" width="1" height="1.5" fill="rgb(150,150,150)"/>
<rect x="1027.6" y="199.0" width="1.5" height="1.5" fill="rgb(125,125,125)"/>
<rect x="1067.1" y="205.2" width="2" height="1.5" fill="rgb(210,210,210)"/>
<rect x="1131.5" y="171.8" width="1" height="1" fill="rgb(105,105,105)"/>
<rect x="1126.9" y="223.4" width="2" height="1" fill="rgb(105,105,105)"/>
<rect x="1216.0" y="205.4" width="1" height="1" fill="rgb(220,220,220)"/>
<rect x="1064.4" y="219.7" width="1" height="1" fill="rgb(150,150,150)"/>
<rect x="1141.9" y="195.3" width="2" height="1.5" fill="rgb(125,125,125)"/>
<rect x="1155.1" y="201.7" width="2" height="1" fill="rgb(125,125,125)"/>
<rect x="1173.7" y="197.1" width="2" height="1" fill="rgb(150,150,150)"/>
<rect x="1057.1" y="213.3" width="1.5" height="1.5" fill="rgb(85,85,85)"/>
<rect x="1106.7" y="195.5" width="1.5" height="1" fill="rgb(210,210,210)"/>
<rect x="1089.6" y="215.7" width="1.5" height="1.5" fill="rgb(200,200,200)"/>
<rect x="1017.1" y="205.7" width="1" height="1" fill="rgb(150,150,150)"/>
<rect x="1084.1" y="217.4" width="2" height="1" fill="rgb(140,140,140)"/>
<rect x="1049.5" y="217.6" width="1" height="1" fill="rgb(210,210,210)"/>
<rect x="1150.8" y="211.1" width="1.5" height="1" fill="rgb(150,150,150)"/>
<rect x="1224.0" y="205.4" width="1" height="1" fill="rgb(220,220,220)"/>
<rect x="1223.6" y="211.4" width="1" height="1" fill="rgb(105,105,105)"/>
<rect x="1138.7" y="221.6" width="1" height="1.5" fill="rgb(150,150,150)"/>
<rect x="1168.0" y="223.0" width="1.5" height="1" fill="rgb(105,105,105)"/>
<rect x="1130.1" y="188.1" width="2" height="1" fill="rgb(140,140,140)"/>
<rect x="1105.5" y="214.8" width="2" height="1" fill="rgb(105,105,105)"/>
<rect x="1156.6" y="191.1" width="1" height="1.5" fill="rgb(85,85,85)"/>
<rect x="1059.6" y="212.6" width="1.5" height="1" fill="rgb(200,200,200)"/>
<rect x="1135.2" y="200.3" width="1.5" height="1" fill="rgb(150,150,150)"/>
<rect x="1154.2" y="185.4" width="1.5" height="1" fill="rgb(105,105,105)"/>
<rect x="1051.3" y="204.4" width="1" height="1.5" fill="rgb(85,85,85)"/>
<rect x="1065.7" y="202.2" width="1" height="1" fill="rgb(200,200,200)"/>
<rect x="1063.1" y="213.6" width="1" height="1" fill="rgb(210,210,210)"/>
<rect x="1058.9" y="192.8" width="1.5" height="1.5" fill="rgb(105,105,105)"/>
<rect x="1199.3" y="204.9" width="1" height="1" fill="rgb(85,85,85)"/>
<rect x="1082.5" y="225.6" width="2" height="1" fill="rgb(200,200,200)"/>
<rect x="1148.9" y="179.4" width="1" height="1" fill="rgb(210,210,210)"/>
<rect x="1058.9" y="217.7" width="1" height="1" fill="rgb(200,200,200)"/>
<rect x="1069.3" y="186.8" width="1" height="1" fill="rgb(210,210,210)"/>
<rect x="1121.1" y="196.6" width="2" height="1.5" fill="rgb(220,220,220)"/>
<rect x="1235.1" y="206.7" width="2" height="1" fill="rgb(105,105,105)"/>
<rect x="1136.3" y="197.7" width="1" height="1" fill="rgb(210,210,210)"/>
<rect x="1146.8" y="206.0" width="2" height="1" fill="rgb(85,85,85)"/>
<rect x="1043.8" y="196.7" width="1.5" height="1" fill="rgb(85,85,85)"/>
<rect x="1109.3" y="198.7" width="1.5" height="1" fill="rgb(150,150,150)"/>
<rect x="1214.1" y="217.4" width="1" height="1" fill="rgb(210,210,210)"/>
<rect x="1204.9" y="213.3" width="1" height="1" fill="rgb(105,105,105)"/>
<rect x="1185.7" y="200.5" width="1" height="1" fill="rgb(125,125,125)"/>
<rect x="1186.7" y="225.6" width="1" height="1" fill="rgb(105,105,105)"/>
<rect x="1121.6" y="189.5" width="2" height="1" fill="rgb(200,200,200)"/>
<rect x="1174.2" y="219.7" width="2" height="1" fill="rgb(140,140,140)"/>
<rect x="1151.1" y="180.2" width="2" height="1" fill="rgb(105,105,105)"/>
<rect x="1120.5" y="176.7" width="1" height="1.5" fill="rgb(220,220,220)"/>
<rect x="1131.6" y="173.0" width="1.5" height="1" fill="rgb(125,125,125)"/>
<rect x="1019.9" y="202.9" width="1" height="1" fill="rgb(200,200,200)"/>
<rect x="1039.5" y="207.9" width="1" height="1.5" fill="rgb(210,210,210)"/>
<rect x="1188.6" y="218.3" width="1" height="1.5" fill="rgb(105,105,105)"/>
<rect x="1104.8" y="222.2" width="2" height="1" fill="rgb(140,140,140)"/>
<rect x="1046.0" y="217.7" width="1.5" height="1.5" fill="rgb(200,200,200)"/>
<rect x="1161.9" y="210.7" width="1" height="1" fill="rgb(125,125,125)"/>
<rect x="1145.5" y="198.6" width="1.5" height="1" fill="rgb(125,125,125)"/>
<rect x="1076.7" y="209.2" width="1.5" height="1" fill="rgb(200,200,200)"/>
<rect x="1012.3" y="207.4" width="1.5" height="1" fill="rgb(140,140,140)"/>
<rect x="1122.7" y="185.5" width="1.5" height="1" fill="rgb(105,105,105)"/>
<rect x="1123.6" y="215.6" width="2" height="1" fill="rgb(150,150,150)"/>
<rect x="1179.7" y="223.7" width="2" height="1" fill="rgb(200,200,200)"/>
<rect x="1078.3" y="192.1" width="1.5" height="1" fill="rgb(105,105,105)"/>
<rect x="1142.0" y="198.7" width="2" height="1" fill="rgb(220,220,220)"/>
<rect x="1167.9" y="202.1" width="1" height="1" fill="rgb(220,220,220)"/>
<rect x="1089.0" y="201.1" width="1.5" height="1" fill="rgb(220,220,220)"/>
<rect x="1086.6" y="182.0" width="1" height="1" fill="rgb(140,140,140)"/>
<rect x="1121.3" y="214.8" width="2" height="1" fill="rgb(150,150,150)"/>
<rect x="1049.9" y="199.1" width="1" height="1" fill="rgb(105,105,105)"/>
<rect x="1124.9" y="176.6" width="1" height="1" fill="rgb(200,200,200)"/>
<rect x="1078.2" y="226.9" width="1" height="1.5" fill="rgb(200,200,200)"/>
<rect x="1138.3" y="200.8" width="1" height="1" fill="rgb(200,200,200)"/>
<rect x="1123.7" y="205.8" width="1" height="1" fill="rgb(85,85,85)"/>
<rect x="1173.9" y="185.2" width="1" height="1" fill="rgb(140,140,140)"/>
<rect x="1067.2" y="220.7" width="1" height="1.5" fill="rgb(210,210,210)"/>
<rect x="1151.1" y="178.0" width="1" height="1.5" fill="rgb(200,200,200)"/>
<rect x="1141.7" y="219.9" width="1" height="1" fill="rgb(105,105,105)"/>
<rect x="1206.0" y="198.1" width="2" height="1" fill="rgb(150,150,150)"/>
<rect x="1075.6" y="195.7" width="1.5" height="1" fill="rgb(200,200,200)"/>
<rect x="1066.5" y="217.2" width="1" height="1" fill="rgb(105,105,105)"/>
<rect x="1195.1" y="191.5" width="1" height="1" fill="rgb(105,105,105)"/>
<rect x="1146.8" y="201.4" width="1.5" height="1" fill="rgb(150,150,150)"/>
<rect x="1129.3" y="187.0" width="2" height="1" fill="rgb(210,210,210)"/>
<rect x="1197.0" y="192.8" width="1" height="1" fill="rgb(125,125,125)"/>
<rect x="1128.8" y="235.2" width="1" height="1.5" fill="rgb(125,125,125)"/>
<rect x="1117.3" y="202.2" width="2" height="1" fill="rgb(105,105,105)"/>
<rect x="1127.8" y="228.0" width="2" height="1" fill="rgb(105,105,105)"/>
<rect x="1114.3" y="218.7" width="1" height="1" fill="rgb(210,210,210)"/>
<rect x="1157.2" y="232.0" width="2" height="1" fill="rgb(85,85,85)"/>
<rect x="1066.1" y="202.7" width="2" height="1" fill="rgb(105,105,105)"/>
<rect x="1138.7" y="181.1" width="1" height="1" fill="rgb(125,125,125)"/>
<rect x="1112.9" y="193.2" width="1" height="1" fill="rgb(150,150,150)"/>
<rect x="1109.3" y="232.9" width="1.5" height="1.5" fill="rgb(210,210,210)"/>
<rect x="1110.9" y="207.3" width="1.5" height="1.5" fill="rgb(85,85,85)"/>
<rect x="1074.5" y="223.4" width="2" height="1" fill="rgb(200,200,200)"/>
<rect x="1173.0" y="208.8" width="1.5" height="1" fill="rgb(85,85,85)"/>
<rect x="1090.9" y="196.8" width="1" height="1" fill="rgb(220,220,220)"/>
<rect x="1170.3" y="228.3" width="1.5" height="1" fill="rgb(85,85,85)"/>
<rect x="1120.7" y="215.3" width="1.5" height="1" fill="rgb(200,200,200)"/>
<rect x="1149.9" y="206.4" width="1" height="1" fill="rgb(200,200,200)"/>
<rect x="1109.4" y="230.4" width="1" height="1" fill="rgb(200,200,200)"/>
<rect x="1100.8" y="220.4" width="1.5" height="1" fill="rgb(210,210,210)"/>
<rect x="1083.4" y="224.1" width="1" height="1" fill="rgb(105,105,105)"/>
<rect x="1225.6" y="202.5" width="1" height="1" fill="rgb(200,200,200)"/>
<rect x="1040.4" y="205.8" width="1.5" height="1" fill="rgb(150,150,150)"/>
<rect x="1186.3" y="188.6" width="1" height="1.5" fill="rgb(210,210,210)"/>
<rect x="1061.3" y="213.3" width="1" height="1.5" fill="rgb(85,85,85)"/>
<rect x="1170.5" y="217.7" width="2" height="1" fill="rgb(220,220,220)"/>
<rect x="1206.3" y="219.2" width="1" height="1" fill="rgb(105,105,105)"/>
<rect x="1148.6" y="218.7" width="2" height="1.5" fill="rgb(210,210,210)"/>
<rect x="1071.4" y="194.1" width="1" height="1" fill="rgb(200,200,200)"/>
<rect x="1164.7" y="184.9" width="1" height="1" fill="rgb(105,105,105)"/>
<rect x="1156.9" y="231.2" width="1" height="1" fill="rgb(105,105,105)"/>
<rect x="1119.3" y="211.2" width="1" height="1" fill="rgb(105,105,105)"/>
<rect x="1065.4" y="189.5" width="2" height="1" fill="rgb(210,210,210)"/>
<rect x="1198.9" y="217.3" width="2" height="1.5" fill="rgb(220,220,220)"/>
<rect x="1163.9" y="196.6" width="1" height="1.5" fill="rgb(220,220,220)"/>
<rect x="1115.2" y="185.1" width="1" height="1" fill="rgb(200,200,200)"/>
<rect x="1065.8" y="199.1" width="2" height="1.5" fill="rgb(200,200,200)"/>
<rect x="1185.3" y="203.2" width="2" height="1" fill="rgb(220,220,220)"/>
<rect x="1116.5" y="183.4" width="1.5" height="1" fill="rgb(210,210,210)"/>
<rect x="1117.7" y="189.4" width="1.5" height="1.5" fill="rgb(150,150,150)"/>
<rect x="1059.4" y="192.2" width="1.5" height="1" fill="rgb(105,105,105)"/>
<rect x="1059.0" y="204.7" width="1" height="1" fill="rgb(105,105,105)"/>
<rect x="1170.9" y="190.5" width="1" height="1" fill="rgb(220,220,220)"/>
<rect x="1101.1" y="222.6" width="1" height="1" fill="rgb(150,150,150)"/>
<rect x="1168.8" y="183.5" width="2" height="1" fill="rgb(125,125,125)"/>
<rect x="1117.8" y="205.0" width="1.5" height="1" fill="rgb(200,200,200)"/>
<rect x="1052.5" y="202.3" width="1.5" height="1" fill="rgb(140,140,140)"/>
<rect x="1046.2" y="206.6" width="1.5" height="1.5" fill="rgb(125,125,125)"/>
<rect x="1056.4" y="197.7" width="1.5" height="1" fill="rgb(150,150,150)"/>
<rect x="1036.4" y="196.9" width="1.5" height="1" fill="rgb(150,150,150)"/>
<rect x="1050.3" y="201.2" width="1" height="1" fill="rgb(220,220,220)"/>
<rect x="1102.6" y="234.9" width="2" height="1" fill="rgb(125,125,125)"/>
<rect x="1170.8" y="197.1" width="1" height="1.5" fill="rgb(125,125,125)"/>
<rect x="1121.9" y="182.9" width="1.5" height="1" fill="rgb(150,150,150)"/>
<rect x="1150.3" y="220.3" width="2" height="1" fill="rgb(140,140,140)"/>
<rect x="1129.9" y="194.1" width="1.5" height="1.5" fill="rgb(140,140,140)"/>
<rect x="1200.3" y="213.7" width="1" height="1.5" fill="rgb(105,105,105)"/>
<rect x="1199.1" y="197.2" width="1.5" height="1" fill="rgb(105,105,105)"/>
<rect x="1084.1" y="223.4" width="1" height="1" fill="rgb(105,105,105)"/>
<rect x="1146.9" y="228.0" width="1" height="1" fill="rgb(85,85,85)"/>
<rect x="1075.8" y="226.2" width="2" height="1.5" fill="rgb(105,105,105)"/>
<rect x="1097.7" y="184.2" width="2" height="1" fill="rgb(200,200,200)"/>
<rect x="1124.4" y="177.7" width="2" height="1" fill="rgb(125,125,125)"/>
<rect x="1071.7" y="221.2" width="1" height="1" fill="rgb(105,105,105)"/>
<rect x="1061.3" y="204.5" width="1" height="1.5" fill="rgb(150,150,150)"/>
<rect x="1232.8" y="207.4" width="1" height="1.5" fill="rgb(210,210,210)"/>
<rect x="1135.2" y="210.7" width="1" height="1" fill="rgb(200,200,200)"/>
<rect x="1117.4" y="183.8" width="1" height="1" fill="rgb(85,85,85)"/>
<rect x="1076.3" y="206.2" width="2" height="1" fill="rgb(85,85,85)"/>
<rect x="1044.0" y="207.0" width="1" height="1" fill="rgb(105,105,105)"/>
<rect x="1107.5" y="233.6" width="1" height="1" fill="rgb(210,210,210)"/>
<rect x="1073.0" y="201.1" width="1" height="1" fill="rgb(210,210,210)"/>
<rect x="1106.4" y="218.5" width="1.5" height="1" fill="rgb(200,200,200)"/>
<rect x="1196.4" y="218.2" width="1" height="1" fill="rgb(210,210,210)"/>
<rect x="1052.3" y="209.6" width="1" height="1" fill="rgb(220,220,220)"/>
<rect x="1108.0" y="224.9" width="1.5" height="1.5" fill="rgb(150,150,150)"/>
<rect x="1134.1" y="181.1" width="1" height="1" fill="rgb(140,140,140)"/>
<rect x="1155.7" y="215.7" width="1" height="1" fill="rgb(140,140,140)"/>
<rect x="1079.5" y="188.9" width="2" height="1" fill="rgb(140,140,140)"/>
<rect x="1076.0" y="225.1" width="1.5" height="1.5" fill="rgb(125,125,125)"/>
<rect x="1157.4" y="227.9" width="1" height="1" fill="rgb(210,210,210)"/>
<rect x="1195.6" y="207.5" width="1" height="1" fill="rgb(200,200,200)"/>
<rect x="1183.5" y="194.7" width="2" height="1" fill="rgb(105,105,105)"/>
<rect x="1013.4" y="204.4" width="2" height="1" fill="rgb(105,105,105)"/>
<rect x="1045.7" y="207.9" width="1" height="1" fill="rgb(220,220,220)"/>
<rect x="1158.0" y="229.2" width="1.5" height="1" fill="rgb(125,125,125)"/>
<rect x="1043.3" y="203.5" width="2" height="1" fill="rgb(140,140,140)"/>
<rect x="1063.7" y="196.5" width="1" height="1" fill="rgb(150,150,150)"/>
<rect x="1212.7" y="198.4" width="1" height="1" fill="rgb(85,85,85)"/>
<rect x="1113.3" y="216.3" width="2" height="1.5" fill="rgb(150,150,150)"/>
<rect x="1046.6" y="199.3" width="1" height="1" fill="rgb(140,140,140)"/>
<rect x="1235.3" y="210.3" width="1" height="1" fill="rgb(125,125,125)"/>
<rect x="1094.8" y="186.4" width="2" height="1" fill="rgb(220,220,220)"/>
<rect x="1180.2" y="216.6" width="1" height="1" fill="rgb(220,220,220)"/>
<rect x="1078.0" y="218.1" width="2" height="1.5" fill="rgb(85,85,85)"/>
<rect x="1058.9" y="192.8" width="1" height="1" fill="rgb(125,125,125)"/>
<rect x="1152.3" y="222.8" width="1" height="1" fill="rgb(85,85,85)"/>
<rect x="1171.9" y="227.4" width="2" height="1" fill="rgb(105,105,105)"/>
<rect x="1027.5" y="199.1" width="1" height="1" fill="rgb(150,150,150)"/>
<rect x="1110.2" y="219.9" width="2" height="1" fill="rgb(200,200,200)"/>
<rect x="1118.7" y="195.2" width="1" height="1.5" fill="rgb(200,200,200)"/>
<rect x="1125.5" y="200.6" width="1.5" height="1" fill="rgb(220,220,220)"/>
<rect x="1180.2" y="190.5" width="2" height="1.5" fill="rgb(125,125,125)"/>
<rect x="1183.9" y="220.9" width="1.5" height="1" fill="rgb(125,125,125)"/>
<rect x="1120.7" y="201.0" width="1.5" height="1.5" fill="rgb(200,200,200)"/>
<rect x="1098.2" y="228.4" width="2" height="1.5" fill="rgb(200,200,200)"/>
<rect x="1107.1" y="230.1" width="1" height="1.5" fill="rgb(210,210,210)"/>
<rect x="1097.1" y="197.9" width="1" height="1" fill="rgb(220,220,220)"/>
<rect x="1120.0" y="218.6" width="1" height="1" fill="rgb(85,85,85)"/>
<rect x="1091.3" y="212.3" width="1.5" height="1" fill="rgb(105,105,105)"/>
<rect x="1132.4" y="229.0" width="1.5" height="1" fill="rgb(85,85,85)"/>
<rect x="1175.9" y="192.6" width="1.5" height="1.5" fill="rgb(210,210,210)"/>
<rect x="1019.0" y="205.8" width="1" height="1" fill="rgb(220,220,220)"/>
<rect x="1122.7" y="219.7" width="1" height="1.5" fill="rgb(200,200,200)"/>
<rect x="1130.6" y="229.9" width="1" height="1.5" fill="rgb(150,150,150)"/>
<rect x="1121.8" y="224.7" width="1.5" height="1" fill="rgb(150,150,150)"/>
<rect x="1075.1" y="219.4" width="1" height="1" fill="rgb(140,140,140)"/>
<rect x="1201.2" y="196.7" width="2" height="1.5" fill="rgb(220,220,220)"/>
<rect x="1228.5" y="212.4" width="1" height="1" fill="rgb(125,125,125)"/>
<rect x="1230.2" y="204.1" width="1.5" height="1" fill="rgb(150,150,150)"/>
<rect x="1172.4" y="213.6" width="1" height="1.5" fill="rgb(150,150,150)"/>
<rect x="1100.2" y="181.5" width="2" height="1" fill="rgb(210,210,210)"/>
<rect x="1187.7" y="221.6" width="1" height="1" fill="rgb(220,220,220)"/>
<rect x="1095.9" y="181.3" width="2" height="1" fill="rgb(125,125,125)"/>
<rect x="1106.4" y="220.9" width="1" height="1.5" fill="rgb(105,105,105)"/>
<rect x="1113.0" y="207.9" width="1" height="1.5" fill="rgb(125,125,125)"/>
<rect x="1129.5" y="225.6" width="1.5" height="1" fill="rgb(105,105,105)"/>
<rect x="1228.3" y="207.6" width="1.5" height="1" fill="rgb(150,150,150)"/>
<rect x="1139.3" y="190.5" width="1" height="1.5" fill="rgb(150,150,150)"/>
<rect x="1133.9" y="172.4" width="1" height="1" fill="rgb(105,105,105)"/>
<rect x="1160.5" y="198.7" width="1" height="1.5" fill="rgb(150,150,150)"/>
<rect x="1100.7" y="209.0" width="1" height="1" fill="rgb(210,210,210)"/>
<rect x="1052.5" y="217.0" width="1" height="1" fill="rgb(210,210,210)"/>
<rect x="1212.6" y="203.1" width="1" height="1" fill="rgb(105,105,105)"/>
<rect x="1139.7" y="216.4" width="2" height="1" fill="rgb(150,150,150)"/>
<rect x="1091.4" y="193.7" width="1" height="1" fill="rgb(85,85,85)"/>
<rect x="1104.3" y="196.1" width="1.5" height="1.5" fill="rgb(200,200,200)"/>
<rect x="1015.2" y="205.8" width="2" height="1" fill="rgb(85,85,85)"/>
<rect x="1144.5" y="178.8" width="1" height="1.5" fill="rgb(150,150,150)"/>
<rect x="1044.4" y="213.0" width="1" height="1" fill="rgb(220,220,220)"/>
<rect x="1159.7" y="217.9" width="2" height="1.5" fill="rgb(140,140,140)"/>
<rect x="1137.2" y="230.2" width="1" height="1" fill="rgb(210,210,210)"/>
<rect x="1106.7" y="184.8" width="2" height="1" fill="rgb(85,85,85)"/>
<rect x="1013.9" y="207.2" width="2" height="1.5" fill="rgb(210,210,210)"/>
<rect x="1131.5" y="238.4" width="1.5" height="1.5" fill="rgb(220,220,220)"/>
<rect x="1054.7" y="212.6" width="2" height="1.5" fill="rgb(140,140,140)"/>
<rect x="1159.8" y="225.4" width="1" height="1" fill="rgb(150,150,150)"/>
<rect x="1145.1" y="197.3" width="2" height="1" fill="rgb(200,200,200)"/>
<rect x="1097.4" y="201.2" width="2" height="1" fill="rgb(85,85,85)"/>
<rect x="1090.9" y="186.4" width="2" height="1.5" fill="rgb(220,220,220)"/>
<rect x="1158.3" y="226.7" width="1" height="1.5" fill="rgb(210,210,210)"/>
<rect x="1058.8" y="205.9" width="2" height="1" fill="rgb(220,220,220)"/>
<rect x="1111.4" y="190.6" width="1.5" height="1.5" fill="rgb(105,105,105)"/>
<rect x="1093.3" y="180.4" width="1.5" height="1" fill="rgb(210,210,210)"/>
<rect x="1109.4" y="219.7" width="2" height="1" fill="rgb(140,140,140)"/>
<rect x="1150.0" y="177.4" width="1" height="1" fill="rgb(210,210,210)"/>
<rect x="1174.7" y="216.3" width="1" height="1.5" fill="rgb(210,210,210)"/>
<rect x="1210.4" y="198.1" width="1.5" height="1.5" fill="rgb(200,200,200)"/>
<rect x="1093.3" y="198.0" width="1" height="1" fill="rgb(210,210,210)"/>
<rect x="1114.4" y="230.6" width="1" height="1" fill="rgb(200,200,200)"/>
<rect x="1138.4" y="191.5" width="1.5" height="1" fill="rgb(220,220,220)"/>
<rect x="1213.4" y="203.2" width="2" height="1" fill="rgb(220,220,220)"/>
<rect x="1232.4" y="210.6" width="1" height="1.5" fill="rgb(125,125,125)"/>
<rect x="1065.0" y="221.3" width="1" height="1" fill="rgb(220,220,220)"/>
<rect x="1138.6" y="222.1" width="1" height="1" fill="rgb(105,105,105)"/>
<rect x="1091.0" y="192.2" width="1" height="1" fill="rgb(200,200,200)"/>
<rect x="1108.2" y="185.7" width="1.5" height="1" fill="rgb(85,85,85)"/>
<rect x="1102.5" y="187.5" width="1" height="1" fill="rgb(150,150,150)"/>
<rect x="1039.3" y="203.3" width="1" height="1.5" fill="rgb(105,105,105)"/>
<rect x="1029.3" y="199.0" width="1" height="1.5" fill="rgb(85,85,85)"/>
<rect x="1208.5" y="209.5" width="1.5" height="1.5" fill="rgb(140,140,140)"/>
<rect x="1141.1" y="225.2" width="2" height="1.5" fill="rgb(140,140,140)"/>
<rect x="1095.4" y="211.1" width="1.5" height="1" fill="rgb(150,150,150)"/>
<rect x="1143.9" y="209.0" width="1" height="1.5" fill="rgb(200,200,200)"/>
<rect x="1163.9" y="184.1" width="2" height="1" fill="rgb(220,220,220)"/>
<rect x="1216.4" y="211.3" width="2" height="1" fill="rgb(125,125,125)"/>
<rect x="1120.1" y="197.1" width="1" height="1" fill="rgb(200,200,200)"/>
<rect x="1075.8" y="201.0" width="1" height="1.5" fill="rgb(85,85,85)"/>
<rect x="1140.9" y="208.5" width="1.5" height="1" fill="rgb(105,105,105)"/>
<rect x="1168.8" y="213.6" width="2" height="1" fill="rgb(220,220,220)"/>
<rect x="1151.9" y="193.1" width="1.5" height="1" fill="rgb(125,125,125)"/>
<rect x="1169.9" y="208.4" width="1" height="1" fill="rgb(200,200,200)"/>
<rect x="1126.4" y="185.9" width="1.5" height="1" fill="rgb(85,85,85)"/>
<rect x="1077.8" y="201.9" width="1.5" height="1" fill="rgb(150,150,150)"/>
<rect x="1048.9" y="218.7" width="1" height="1" fill="rgb(210,210,210)"/>
<rect x="1044.1" y="205.2" width="2" height="1.5" fill="rgb(105,105,105)"/>
<rect x="1104.2" y="199.0" width="1" height="1" fill="rgb(220,220,220)"/>
<rect x="1148.1" y="190.1" width="2" height="1" fill="rgb(150,150,150)"/>
<rect x="1133.1" y="207.0" width="1.5" height="1" fill="rgb(140,140,140)"/>
<rect x="1087.1" y="209.8" width="2" height="1" fill="rgb(85,85,85)"/>
<rect x="1112.2" y="200.8" width="1.5" height="1.5" fill="rgb(220,220,220)"/>
<rect x="1131.0" y="175.0" width="1" height="1" fill="rgb(140,140,140)"/>
<rect x="1081.2" y="222.0" width="2" height="1.5" fill="rgb(200,200,200)"/>
<rect x="1076.7" y="186.8" width="1.5" height="1" fill="rgb(150,150,150)"/>
<rect x="1082.6" y="190.5" width="2" height="1.5" fill="rgb(125,125,125)"/>
<rect x="1095.7" y="186.6" width="1" height="1.5" fill="rgb(210,210,210)"/>
<rect x="1099.3" y="182.5" width="2" height="1" fill="rgb(140,140,140)"/>
<rect x="1198.0" y="197.2" width="1" height="1" fill="rgb(200,200,200)"/>
<rect x="1109.7" y="222.8" width="1" height="1" fill="rgb(140,140,140)"/>
<rect x="1137.9" y="191.0" width="1" height="1" fill="rgb(105,105,105)"/>
<rect x="1122.7" y="229.4" width="1" height="1" fill="rgb(140,140,140)"/>
<rect x="1133.5" y="221.1" width="1" height="1.5" fill="rgb(125,125,125)"/>
<rect x="1026.5" y="210.3" width="1.5" height="1" fill="rgb(220,220,220)"/>
<rect x="1204.5" y="201.9" width="1" height="1.5" fill="rgb(200,200,200)"/>
<rect x="1086.6" y="231.4" width="2" height="1.5" fill="rgb(150,150,150)"/>
<rect x="1120.8" y="223.9" width="2" height="1" fill="rgb(125,125,125)"/>
<rect x="1088.5" y="183.1" width="1.5" height="1" fill="rgb(150,150,150)"/>
<rect x="1094.6" y="183.6" width="1" height="1" fill="rgb(125,125,125)"/>
<rect x="1141.1" y="227.6" width="2" height="1.5" fill="rgb(105,105,105)"/>
<rect x="1043.5" y="193.9" width="2" height="1.5" fill="rgb(210,210,210)"/>
<rect x="1114.9" y="212.1" width="1" height="1" fill="rgb(85,85,85)"/>
<rect x="1121.3" y="216.0" width="2" height="1" fill="rgb(200,200,200)"/>
<rect x="1197.8" y="196.6" width="1" height="1.5" fill="rgb(125,125,125)"/>
<rect x="1084.0" y="230.3" width="2" height="1" fill="rgb(140,140,140)"/>
<rect x="1068.3" y="189.5" width="1" height="1" fill="rgb(85,85,85)"/>
<rect x="1077.8" y="200.2" width="2" height="1.5" fill="rgb(210,210,210)"/>
<rect x="1067.3" y="213.4" width="1.5" height="1" fill="rgb(85,85,85)"/>
<rect x="1041.0" y="206.1" width="1" height="1" fill="rgb(85,85,85)"/>
<rect x="1157.8" y="188.7" width="1" height="1" fill="rgb(105,105,105)"/>
<rect x="1180.7" y="198.4" width="1" height="1" fill="rgb(85,85,85)"/>
<rect x="1061.7" y="202.3" width="2" height="1" fill="rgb(105,105,105)"/>
<rect x="1075.3" y="222.8" width="1" height="1.5" fill="rgb(105,105,105)"/>
<rect x="1150.7" y="192.9" width="1" height="1" fill="rgb(210,210,210)"/>
<rect x="1040.9" y="216.8" width="1" height="1" fill="rgb(85,85,85)"/>
<rect x="1170.1" y="188.3" width="1.5" height="1.5" fill="rgb(210,210,210)"/>
<rect x="1118.9" y="220.8" width="2" height="1.5" fill="rgb(125,125,125)"/>
<rect x="1224.2" y="209.8" width="1" height="1" fill="rgb(105,105,105)"/>
<rect x="1073.7" y="206.3" width="1" height="1.5" fill="rgb(105,105,105)"/>
<rect x="1155.0" y="224.3" width="1" height="1.5" fill="rgb(150,150,150)"/>
<rect x="1214.1" y="199.1" width="1.5" height="1" fill="rgb(200,200,200)"/>
<rect x="1186.4" y="200.8" width="1.5" height="1" fill="rgb(125,125,125)"/>
<rect x="1075.5" y="190.9" width="2" height="1.5" fill="rgb(85,85,85)"/>
<rect x="1100.0" y="192.6" width="1" height="1" fill="rgb(210,210,210)"/>
<rect x="1162.2" y="222.5" width="1.5" height="1" fill="rgb(85,85,85)"/>
<rect x="1132.3" y="219.1" width="1.5" height="1" fill="rgb(140,140,140)"/>
<rect x="1123.7" y="215.2" width="1" height="1" fill="rgb(85,85,85)"/>
<rect x="1164.2" y="205.1" width="2" height="1.5" fill="rgb(150,150,150)"/>
<rect x="1090.0" y="184.9" width="2" height="1" fill="rgb(140,140,140)"/>
<rect x="1196.3" y="212.8" width="1.5" height="1" fill="rgb(210,210,210)"/>
<rect x="1101.9" y="194.5" width="1" height="1.5" fill="rgb(220,220,220)"/>
<rect x="1147.4" y="178.6" width="1" height="1" fill="rgb(125,125,125)"/>
<rect x="1076.5" y="197.5" width="1.5" height="1.5" fill="rgb(140,140,140)"/>
<rect x="1022.1" y="206.8" width="1" height="1" fill="rgb(85,85,85)"/>
<rect x="1117.9" y="191.0" width="2" height="1" fill="rgb(150,150,150)"/>
<rect x="1126.6" y="173.8" width="2" height="1" fill="rgb(85,85,85)"/>
<rect x="1086.4" y="224.3" width="1" height="1.5" fill="rgb(105,105,105)"/>
<rect x="1057.5" y="196.3" width="1" height="1" fill="rgb(200,200,200)"/>
<rect x="1174.4" y="209.6" width="1" height="1" fill="rgb(210,210,210)"/>
<rect x="1204.9" y="219.0" width="2" height="1" fill="rgb(150,150,150)"/>
<rect x="1138.1" y="200.8" width="2" height="1" fill="rgb(85,85,85)"/>
<rect x="1167.0" y="193.6" width="1.5" height="1" fill="rgb(125,125,125)"/>
<rect x="1113.3" y="199.9" width="1" height="1.5" fill="rgb(200,200,200)"/>
<rect x="1094.1" y="212.5" width="1.5" height="1" fill="rgb(210,210,210)"/>
<rect x="1205.1" y="197.6" width="2" height="1" fill="rgb(210,210,210)"/>
<rect x="1027.3" y="206.7" width="1" height="1.5" fill="rgb(210,210,210)"/>
<rect x="1174.9" y="188.5" width="1" height="1.5" fill="rgb(210,210,210)"/>
<rect x="1049.5" y="202.6" width="1.5" height="1" fill="rgb(150,150,150)"/>
<rect x="1160.9" y="226.9" width="1" height="1" fill="rgb(85,85,85)"/>
<rect x="1078.9" y="193.0" width="1" height="1.5" fill="rgb(125,125,125)"/>
<rect x="1162.5" y="201.0" width="1" height="1" fill="rgb(125,125,125)"/>
<rect x="1131.5" y="212.8" width="1.5" height="1" fill="rgb(85,85,85)"/>
<rect x="1062.0" y="198.7" width="1" height="1.5" fill="rgb(105,105,105)"/>
<rect x="1086.5" y="229.1" width="2" height="1" fill="rgb(220,220,220)"/>
<rect x="1216.0" y="211.1" width="2" height="1" fill="rgb(125,125,125)"/>
<rect x="1151.3" y="230.1" width="1" height="1" fill="rgb(140,140,140)"/>
<rect x="1232.3" y="209.2" width="1.5" height="1" fill="rgb(125,125,125)"/>
<rect x="1202.1" y="214.5" width="1" height="1" fill="rgb(85,85,85)"/>
<rect x="1170.0" y="195.1" width="1" height="1" fill="rgb(150,150,150)"/>
<rect x="1109.8" y="197.8" width="1.5" height="1" fill="rgb(125,125,125)"/>
<rect x="1095.6" y="209.4" width="2" height="1" fill="rgb(140,140,140)"/>
<rect x="1029.2" y="204.5" width="1" height="1" fill="rgb(125,125,125)"/>
<rect x="1142.5" y="212.5" width="1" height="1" fill="rgb(200,200,200)"/>
<rect x="1039.8" y="211.1" width="1" height="1" fill="rgb(140,140,140)"/>
<rect x="1162.5" y="203.4" width="2" height="1" fill="rgb(210,210,210)"/>
<rect x="1128.7" y="196.6" width="1.5" height="1" fill="rgb(210,210,210)"/>
<rect x="1125.9" y="195.8" width="1.5" height="1.5" fill="rgb(200,200,200)"/>
<rect x="1188.9" y="213.9" width="1" height="1" fill="rgb(210,210,210)"/>
<rect x="1119.5" y="213.5" width="1.5" height="1.5" fill="rgb(125,125,125)"/>
<rect x="1064.1" y="196.1" width="1" height="1.5" fill="rgb(125,125,125)"/>
<rect x="1126.4" y="225.6" width="1" height="1" fill="rgb(140,140,140)"/>
<rect x="1104.0" y="210.9" width="1.5" height="1" fill="rgb(140,140,140)"/>
<rect x="1139.9" y="188.3" width="1" height="1" fill="rgb(220,220,220)"/>
<rect x="1179.3" y="213.6" width="2" height="1" fill="rgb(200,200,200)"/>
<rect x="1055.2" y="220.9" width="1" height="1" fill="rgb(105,105,105)"/>
<rect x="1131.6" y="212.3" width="1.5" height="1" fill="rgb(200,200,200)"/>
<rect x="1120.0" y="203.8" width="1" height="1" fill="rgb(150,150,150)"/>
<rect x="1171.7" y="212.4" width="1" height="1" fill="rgb(105,105,105)"/>
<rect x="1114.1" y="179.8" width="1" height="1" fill="rgb(105,105,105)"/>
<rect x="1072.8" y="196.5" width="1.5" height="1" fill="rgb(200,200,200)"/>
<rect x="1213.3" y="200.6" width="2" height="1" fill="rgb(85,85,85)"/>
<rect x="1180.4" y="203.5" width="2" height="1.5" fill="rgb(125,125,125)"/>
<rect x="1203.7" y="213.5" width="1" height="1" fill="rgb(220,220,220)"/>
<rect x="1199.7" y="212.1" width="1" height="1" fill="rgb(150,150,150)"/>
<rect x="1040.8" y="206.6" width="1.5" height="1" fill="rgb(150,150,150)"/>
<rect x="1205.1" y="206.3" width="2" height="1.5" fill="rgb(85,85,85)"/>
<rect x="1159.4" y="226.9" width="1" height="1" fill="rgb(140,140,140)"/>
<rect x="1129.2" y="225.5" width="2" height="1" fill="rgb(125,125,125)"/>
<rect x="1092.1" y="194.4" width="1" height="1" fill="rgb(220,220,220)"/>
<rect x="1066.7" y="221.1" width="1" height="1.5" fill="rgb(125,125,125)"/>
<rect x="1139.5" y="208.8" width="1" height="1.5" fill="rgb(85,85,85)"/>
<rect x="1069.3" y="197.7" width="1" height="1.5" fill="rgb(220,220,220)"/>
<rect x="1195.7" y="210.1" width="1" height="1" fill="rgb(140,140,140)"/>
<rect x="1051.4" y="208.2" width="1" height="1" fill="rgb(105,105,105)"/>
<rect x="1217.4" y="210.5" width="1" height="1" fill="rgb(105,105,105)"/>
<rect x="1170.5" y="210.1" width="2" height="1" fill="rgb(200,200,200)"/>
<rect x="1100.4" y="234.3" width="1.5" height="1.5" fill="rgb(220,220,220)"/>
<rect x="1108.2" y="186.2" width="1.5" height="1" fill="rgb(210,210,210)"/>
<rect x="1179.5" y="220.4" width="1.5" height="1" fill="rgb(140,140,140)"/>
<rect x="1040.2" y="210.8" width="1.5" height="1" fill="rgb(105,105,105)"/>
<rect x="1093.4" y="229.7" width="1.5" height="1" fill="rgb(210,210,210)"/>
<rect x="1067.1" y="211.8" width="1" height="1" fill="rgb(220,220,220)"/>
<rect x="1188.5" y="210.1" width="1" height="1" fill="rgb(105,105,105)"/>
<rect x="1106.8" y="209.9" width="1.5" height="1" fill="rgb(105,105,105)"/>
<rect x="1102.0" y="202.8" width="1" height="1" fill="rgb(220,220,220)"/>
<rect x="1126.6" y="174.3" width="1.5" height="1.5" fill="rgb(150,150,150)"/>
<rect x="1140.0" y="178.4" width="1" height="1" fill="rgb(200,200,200)"/>
<rect x="1054.7" y="212.5" width="1" height="1.5" fill="rgb(220,220,220)"/>
<rect x="1112.1" y="188.8" width="1" height="1" fill="rgb(210,210,210)"/>
<rect x="1150.1" y="230.1" width="2" height="1" fill="rgb(210,210,210)"/>
<rect x="1176.0" y="215.8" width="2" height="1" fill="rgb(105,105,105)"/>
<rect x="1125.4" y="214.0" width="1" height="1" fill="rgb(220,220,220)"/>
<rect x="1017.0" y="204.7" width="1.5" height="1.5" fill="rgb(210,210,210)"/>
<rect x="1151.1" y="230.7" width="1.5" height="1" fill="rgb(150,150,150)"/>
<rect x="1065.0" y="190.6" width="2" height="1" fill="rgb(220,220,220)"/>
<rect x="1042.7" y="197.4" width="1.5" height="1" fill="rgb(150,150,150)"/>
<rect x="1020.8" y="202.1" width="1" height="1.5" fill="rgb(220,220,220)"/>
<rect x="1155.6" y="187.8" width="1" height="1" fill="rgb(220,220,220)"/>
<rect x="1103.6" y="205.8" width="1" height="1" fill="rgb(220,220,220)"/>
<rect x="1083.5" y="201.8" width="1" height="1.5" fill="rgb(210,210,210)"/>
<rect x="1156.2" y="231.7" width="1" height="1.5" fill="rgb(85,85,85)"/>
<rect x="1107.3" y="202.8" width="1.5" height="1" fill="rgb(125,125,125)"/>
<rect x="1206.1" y="202.8" width="1.5" height="1" fill="rgb(105,105,105)"/>
<rect x="1031.1" y="213.5" width="1.5" height="1" fill="rgb(210,210,210)"/>
<rect x="1109.6" y="208.5" width="1" height="1" fill="rgb(85,85,85)"/>
<rect x="1087.9" y="199.0" width="1" height="1.5" fill="rgb(125,125,125)"/>
<rect x="1225.9" y="210.0" width="2" height="1" fill="rgb(105,105,105)"/>
<rect x="1118.2" y="221.5" width="1" height="1" fill="rgb(105,105,105)"/>
<rect x="1113.0" y="211.4" width="1" height="1.5" fill="rgb(210,210,210)"/>
<rect x="1043.9" y="194.7" width="1" height="1" fill="rgb(140,140,140)"/>
<rect x="1137.9" y="213.8" width="1.5" height="1" fill="rgb(200,200,200)"/>
<rect x="1099.6" y="186.9" width="1" height="1.5" fill="rgb(140,140,140)"/>
<rect x="1061.7" y="206.0" width="1.5" height="1.5" fill="rgb(105,105,105)"/>
<rect x="1132.7" y="239.1" width="1" height="1.5" fill="rgb(220,220,220)"/>
<rect x="1156.5" y="228.0" width="1.5" height="1.5" fill="rgb(150,150,150)"/>
<rect x="1100.0" y="188.0" width="1" height="1" fill="rgb(140,140,140)"/>
<rect x="1109.3" y="183.1" width="2" height="1.5" fill="rgb(85,85,85)"/>
<rect x="1173.4" y="198.0" width="1" height="1" fill="rgb(105,105,105)"/>
<rect x="1113.7" y="211.0" width="1" height="1.5" fill="rgb(220,220,220)"/>
<rect x="1179.9" y="187.3" width="1.5" height="1.5" fill="rgb(140,140,140)"/>
<rect x="1064.1" y="191.9" width="2" height="1.5" fill="rgb(105,105,105)"/>
<rect x="1140.7" y="195.4" width="1" height="1" fill="rgb(140,140,140)"/>
<rect x="1157.3" y="221.4" width="1" height="1" fill="rgb(105,105,105)"/>
<rect x="1236.6" y="205.8" width="1" height="1" fill="rgb(140,140,140)"/>
<rect x="1222.3" y="202.6" width="1" height="1.5" fill="rgb(125,125,125)"/>
<rect x="1184.3" y="197.9" width="1" height="1" fill="rgb(150,150,150)"/>
<rect x="1090.7" y="227.0" width="1" height="1.5" fill="rgb(200,200,200)"/>
<rect x="1077.5" y="187.5" width="2" height="1" fill="rgb(220,220,220)"/>
<rect x="1220.3" y="202.6" width="2" height="1" fill="rgb(220,220,220)"/>
<rect x="1150.4" y="207.1" width="1.5" height="1" fill="rgb(125,125,125)"/>
<rect x="1088.8" y="227.9" width="2" height="1" fill="rgb(200,200,200)"/>
<rect x="1179.8" y="217.2" width="2" height="1.5" fill="rgb(140,140,140)"/>
<rect x="1053.6" y="191.4" width="1.5" height="1" fill="rgb(200,200,200)"/>
<rect x="1173.8" y="185.2" width="1" height="1.5" fill="rgb(150,150,150)"/>
<rect x="1181.2" y="196.4" width="1" height="1" fill="rgb(210,210,210)"/>
<rect x="1128.3" y="200.3" width="1.5" height="1.5" fill="rgb(85,85,85)"/>
<rect x="1147.9" y="177.9" width="1" height="1" fill="rgb(150,150,150)"/>
<rect x="1041.3" y="216.3" width="1.5" height="1" fill="rgb(150,150,150)"/>
<rect x="1183.0" y="198.5" width="1" height="1" fill="rgb(200,200,200)"/>
<rect x="1080.8" y="203.7" width="1.5" height="1.5" fill="rgb(125,125,125)"/>
<rect x="1091.8" y="205.1" width="1" height="1.5" fill="rgb(140,140,140)"/>
<rect x="1118.2" y="183.6" width="2" height="1.5" fill="rgb(105,105,105)"/>
<rect x="1106.8" y="203.5" width="1.5" height="1" fill="rgb(200,200,200)"/>
<rect x="1171.2" y="185.2" width="1" height="1" fill="rgb(105,105,105)"/>
<rect x="1035.4" y="208.3" width="2" height="1" fill="rgb(220,220,220)"/>
<rect x="1226.2" y="213.0" width="1.5" height="1" fill="rgb(140,140,140)"/>
<rect x="1084.5" y="224.5" width="2" height="1" fill="rgb(105,105,105)"/>
<rect x="1149.9" y="213.7" width="1" height="1" fill="rgb(140,140,140)"/>
<rect x="1117.8" y="237.4" width="2" height="1" fill="rgb(220,220,220)"/>
<rect x="1091.2" y="231.3" width="1" height="1" fill="rgb(85,85,85)"/>
<rect x="1101.2" y="185.5" width="2" height="1" fill="rgb(125,125,125)"/>
<rect x="1194.0" y="212.3" width="2" height="1.5" fill="rgb(125,125,125)"/>
<rect x="1101.6" y="197.1" width="1.5" height="1" fill="rgb(150,150,150)"/>
<rect x="1061.5" y="217.4" width="1" height="1" fill="rgb(140,140,140)"/>
<rect x="1026.5" y="205.0" width="1" height="1" fill="rgb(220,220,220)"/>
<rect x="1029.2" y="201.1" width="2" height="1" fill="rgb(200,200,200)"/>
<rect x="1046.9" y="198.7" width="1" height="1" fill="rgb(85,85,85)"/>
<rect x="1093.1" y="222.0" width="1.5" height="1.5" fill="rgb(210,210,210)"/>
<rect x="1158.9" y="183.5" width="2" height="1" fill="rgb(140,140,140)"/>
<rect x="1103.5" y="202.4" width="1" height="1.5" fill="rgb(85,85,85)"/>
<rect x="1057.6" y="213.1" width="1" height="1" fill="rgb(140,140,140)"/>
<rect x="1139.4" y="237.2" width="1" height="1.5" fill="rgb(105,105,105)"/>
<rect x="1163.3" y="219.5" width="1" height="1" fill="rgb(140,140,140)"/>
<rect x="1044.7" y="196.2" width="1" height="1" fill="rgb(200,200,200)"/>
<rect x="1123.5" y="240.3" width="1" height="1" fill="rgb(140,140,140)"/>
<rect x="1083.7" y="203.9" width="2" height="1" fill="rgb(125,125,125)"/>
<rect x="1134.9" y="186.6" width="1" height="1.5" fill="rgb(105,105,105)"/>
<rect x="1147.6" y="221.9" width="2" height="1.5" fill="rgb(85,85,85)"/>
<rect x="1087.2" y="213.9" width="2" height="1" fill="rgb(125,125,125)"/>
<rect x="1139.4" y="175.1" width="1" height="1.5" fill="rgb(150,150,150)"/>
<rect x="1187.2" y="189.8" width="2" height="1" fill="rgb(200,200,200)"/>
<rect x="1074.8" y="188.2" width="2" height="1" fill="rgb(220,220,220)"/>
<rect x="1111.9" y="227.3" width="1" height="1" fill="rgb(140,140,140)"/>
<rect x="1028.8" y="203.8" width="2" height="1" fill="rgb(220,220,220)"/>
<rect x="1123.4" y="171.6" width="1" height="1" fill="rgb(150,150,150)"/>
<rect x="1154.5" y="209.0" width="1.5" height="1" fill="rgb(125,125,125)"/>
<rect x="1080.3" y="219.0" width="1" height="1.5" fill="rgb(85,85,85)"/>
<rect x="1193.4" y="199.3" width="2" height="1.5" fill="rgb(125,125,125)"/>
<rect x="1129.1" y="184.8" width="1" height="1" fill="rgb(200,200,200)"/>
<rect x="1113.7" y="207.1" width="1" height="1" fill="rgb(220,220,220)"/>
<rect x="1130.0" y="225.3" width="1" height="1" fill="rgb(150,150,150)"/>
<rect x="1107.3" y="215.8" width="1" height="1" fill="rgb(125,125,125)"/>
<rect x="1069.9" y="191.7" width="2" height="1" fill="rgb(210,210,210)"/>
<rect x="1198.0" y="212.0" width="2" height="1" fill="rgb(220,220,220)"/>
<rect x="1135.2" y="176.2" width="1" height="1.5" fill="rgb(210,210,210)"/>
<rect x="1067.5" y="191.2" width="1" height="1.5" fill="rgb(105,105,105)"/>
<rect x="1072.3" y="195.3" width="1" height="1" fill="rgb(105,105,105)"/>
<rect x="1091.0" y="191.6" width="1" height="1" fill="rgb(150,150,150)"/>
<rect x="1080.0" y="214.7" width="1" height="1" fill="rgb(125,125,125)"/>
<rect x="1049.0" y="207.8" width="2" height="1.5" fill="rgb(200,200,200)"/>
<rect x="1053.4" y="205.7" width="2" height="1" fill="rgb(85,85,85)"/>
<rect x="1114.7" y="234.0" width="1" height="1.5" fill="rgb(210,210,210)"/>
<rect x="1074.6" y="226.9" width="1" height="1.5" fill="rgb(140,140,140)"/>
<rect x="1146.1" y="236.0" width="1.5" height="1" fill="rgb(150,150,150)"/>
<rect x="1128.4" y="188.1" width="1.5" height="1" fill="rgb(140,140,140)"/>
<rect x="1191.8" y="193.8" width="1" height="1" fill="rgb(150,150,150)"/>
<rect x="1187.3" y="209.0" width="1" height="1" fill="rgb(140,140,140)"/>
<rect x="1109.4" y="231.7" width="2" height="1" fill="rgb(125,125,125)"/>
<rect x="1133.5" y="232.8" width="1" height="1.5" fill="rgb(85,85,85)"/>
<rect x="1104.4" y="193.9" width="1.5" height="1" fill="rgb(140,140,140)"/>
<rect x="1119.0" y="213.8" width="2" height="1" fill="rgb(140,140,140)"/>
<rect x="1119.6" y="188.2" width="1" height="1" fill="rgb(85,85,85)"/>
<rect x="1034.0" y="206.1" width="1" height="1.5" fill="rgb(150,150,150)"/>
<rect x="1119.5" y="229.6" width="1.5" height="1" fill="rgb(140,140,140)"/>
<rect x="1112.1" y="196.7" width="1.5" height="1" fill="rgb(105,105,105)"/>
<rect x="1137.0" y="204.8" width="2" height="1" fill="rgb(220,220,220)"/>
<rect x="1195.6" y="194.9" width="1.5" height="1" fill="rgb(140,140,140)"/>
<rect x="1083.9" y="230.5" width="1" height="1.5" fill="rgb(125,125,125)"/>
<rect x="1155.3" y="205.6" width="2" height="1.5" fill="rgb(220,220,220)"/>
<rect x="1081.8" y="219.8" width="1.5" height="1.5" fill="rgb(140,140,140)"/>
<rect x="1128.2" y="237.8" width="1.5" height="1.5" fill="rgb(150,150,150)"/>
<rect x="1121.8" y="186.4" width="1.5" height="1" fill="rgb(150,150,150)"/>
<rect x="1172.0" y="222.3" width="1.5" height="1" fill="rgb(125,125,125)"/>
<rect x="1184.7" y="189.5" width="1" height="1" fill="rgb(200,200,200)"/>
<rect x="1071.9" y="194.1" width="1" height="1" fill="rgb(200,200,200)"/>
<rect x="1184.9" y="188.7" width="1.5" height="1" fill="rgb(200,200,200)"/>
<rect x="1176.0" y="195.8" width="2" height="1" fill="rgb(85,85,85)"/>
<rect x="1181.5" y="189.3" width="2" height="1.5" fill="rgb(125,125,125)"/>
<rect x="1116.0" y="194.6" width="1" height="1" fill="rgb(85,85,85)"/>
<rect x="1125.5" y="183.3" width="1.5" height="1" fill="rgb(140,140,140)"/>
<rect x="1138.5" y="199.5" width="2" height="1" fill="rgb(140,140,140)"/>
<rect x="1137.7" y="200.3" width="1.5" height="1" fill="rgb(125,125,125)"/>
<rect x="1162.9" y="223.3" width="2" height="1.5" fill="rgb(105,105,105)"/>
<rect x="1071.7" y="226.9" width="1.5" height="1" fill="rgb(210,210,210)"/>
<rect x="1193.9" y="194.5" width="1.5" height="1.5" fill="rgb(150,150,150)"/>
<rect x="1138.2" y="209.7" width="2" height="1" fill="rgb(140,140,140)"/>
<rect x="1058.0" y="201.0" width="1" height="1" fill="rgb(140,140,140)"/>
<rect x="1074.0" y="210.5" width="2" height="1.5" fill="rgb(150,150,150)"/>
<rect x="1159.0" y="207.1" width="1" height="1.5" fill="rgb(125,125,125)"/>
<rect x="1190.2" y="191.6" width="1.5" height="1" fill="rgb(200,200,200)"/>
<rect x="1176.3" y="228.1" width="1.5" height="1.5" fill="rgb(220,220,220)"/>
<rect x="1141.7" y="184.8" width="2" height="1" fill="rgb(220,220,220)"/>
<rect x="1072.9" y="195.6" width="1" height="1" fill="rgb(210,210,210)"/>
<rect x="1106.3" y="182.2" width="1" height="1.5" fill="rgb(105,105,105)"/>
<rect x="1108.6" y="235.0" width="1" height="1" fill="rgb(150,150,150)"/>
<rect x="1130.6" y="176.2" width="1" height="1" fill="rgb(220,220,220)"/>
<rect x="1126.4" y="220.1" width="1.5" height="1" fill="rgb(210,210,210)"/>
<rect x="1181.1" y="225.3" width="1" height="1" fill="rgb(140,140,140)"/>
<rect x="1115.5" y="190.5" width="1.5" height="1" fill="rgb(200,200,200)"/>
<rect x="1142.5" y="195.6" width="2" height="1" fill="rgb(210,210,210)"/>
<rect x="1087.3" y="217.1" width="1.5" height="1" fill="rgb(220,220,220)"/>
<rect x="1086.9" y="187.7" width="1" height="1" fill="rgb(140,140,140)"/>
<rect x="1092.1" y="208.8" width="1" height="1" fill="rgb(105,105,105)"/>
<rect x="1159.3" y="203.4" width="1.5" height="1" fill="rgb(85,85,85)"/>
<rect x="1181.6" y="187.4" width="1.5" height="1" fill="rgb(125,125,125)"/>
<rect x="1215.1" y="217.3" width="1" height="1" fill="rgb(85,85,85)"/>
<rect x="1012.0" y="204.6" width="2" height="1" fill="rgb(150,150,150)"/>
<rect x="1103.5" y="226.3" width="2" height="1.5" fill="rgb(140,140,140)"/>
<rect x="1154.8" y="213.3" width="1" height="1" fill="rgb(210,210,210)"/>
<rect x="1112.3" y="181.4" width="1" height="1.5" fill="rgb(125,125,125)"/>
<rect x="1106.2" y="221.4" width="1.5" height="1" fill="rgb(150,150,150)"/>
<rect x="1172.4" y="188.4" width="1.5" height="1" fill="rgb(220,220,220)"/>
<rect x="1112.4" y="203.1" width="2" height="1.5" fill="rgb(105,105,105)"/>
<rect x="1138.2" y="190.3" width="1.5" height="1" fill="rgb(210,210,210)"/>
<rect x="1111.2" y="200.3" width="1" height="1" fill="rgb(210,210,210)"/>
<rect x="1062.1" y="223.5" width="2" height="1.5" fill="rgb(125,125,125)"/>
<rect x="1181.9" y="218.7" width="1" height="1" fill="rgb(85,85,85)"/>
<rect x="1129.2" y="200.6" width="1.5" height="1.5" fill="rgb(210,210,210)"/>
<rect x="1151.1" y="198.8" width="1.5" height="1" fill="rgb(150,150,150)"/>
<rect x="1178.6" y="190.1" width="1" height="1.5" fill="rgb(200,200,200)"/>
<rect x="1095.4" y="187.3" width="1" height="1.5" fill="rgb(140,140,140)"/>
<rect x="1115.9" y="239.5" width="1.5" height="1.5" fill="rgb(150,150,150)"/>
<rect x="1093.4" y="233.2" width="1" height="1.5" fill="rgb(125,125,125)"/>
<rect x="1106.2" y="180.4" width="1" height="1.5" fill="rgb(140,140,140)"/>
<rect x="1126.5" y="186.9" width="1" height="1.5" fill="rgb(85,85,85)"/>
<rect x="1094.8" y="195.2" width="1.5" height="1.5" fill="rgb(140,140,140)"/>
<rect x="1160.6" y="196.3" width="2" height="1" fill="rgb(210,210,210)"/>
<rect x="1160.6" y="221.0" width="1" height="1" fill="rgb(200,200,200)"/>
<rect x="1199.1" y="205.7" width="1" height="1" fill="rgb(140,140,140)"/>
<rect x="1115.0" y="191.2" width="2" height="1.5" fill="rgb(125,125,125)"/>
<rect x="1155.8" y="227.6" width="1.5" height="1.5" fill="rgb(125,125,125)"/>
<rect x="1020.6" y="210.2" width="1.5" height="1.5" fill="rgb(220,220,220)"/>
<rect x="1110.5" y="205.8" width="2" height="1" fill="rgb(85,85,85)"/>
<rect x="1149.4" y="201.1" width="1.5" height="1" fill="rgb(150,150,150)"/>
<rect x="1156.4" y="191.9" width="1.5" height="1" fill="rgb(210,210,210)"/>
<rect x="1038.0" y="215.5" width="1" height="1" fill="rgb(220,220,220)"/>
<rect x="1232.6" y="210.9" width="1" height="1.5" fill="rgb(150,150,150)"/>
<rect x="1120.5" y="176.4" width="1.5" height="1.5" fill="rgb(150,150,150)"/>
<rect x="1186.2" y="213.2" width="1" height="1" fill="rgb(125,125,125)"/>
<rect x="1071.2" y="210.0" width="1" height="1" fill="rgb(150,150,150)"/>
<rect x="1041.9" y="198.2" width="2" height="1" fill="rgb(210,210,210)"/>
<rect x="1161.4" y="201.5" width="1.5" height="1.5" fill="rgb(125,125,125)"/>
<rect x="1143.9" y="208.8" width="2" height="1" fill="rgb(200,200,200)"/>
<rect x="1167.8" y="183.0" width="1" height="1.5" fill="rgb(140,140,140)"/>
<rect x="1184.3" y="216.0" width="1.5" height="1.5" fill="rgb(150,150,150)"/>
<rect x="1117.7" y="206.5" width="2" height="1" fill="rgb(200,200,200)"/>
<rect x="1118.9" y="185.9" width="1" height="1.5" fill="rgb(210,210,210)"/>
<rect x="1157.4" y="215.1" width="1" height="1.5" fill="rgb(210,210,210)"/>
<rect x="1089.0" y="204.4" width="1" height="1" fill="rgb(200,200,200)"/>
<rect x="1203.7" y="197.8" width="1" height="1.5" fill="rgb(125,125,125)"/>
<rect x="1053.0" y="212.9" width="2" height="1" fill="rgb(200,200,200)"/>
<rect x="1088.3" y="207.2" width="1" height="1" fill="rgb(125,125,125)"/>
<rect x="1120.0" y="192.9" width="1.5" height="1.5" fill="rgb(200,200,200)"/>
<rect x="1136.6" y="234.7" width="1" height="1.5" fill="rgb(140,140,140)"/>
<rect x="1097.1" y="197.9" width="2" height="1" fill="rgb(210,210,210)"/>
<rect x="1079.4" y="216.9" width="1.5" height="1.5" fill="rgb(85,85,85)"/>
<rect x="1119.0" y="217.6" width="2" height="1" fill="rgb(85,85,85)"/>
<rect x="1102.8" y="177.2" width="1" height="1" fill="rgb(85,85,85)"/>
<rect x="1157.6" y="184.3" width="2" height="1.5" fill="rgb(125,125,125)"/>
<rect x="1175.9" y="188.6" width="1.5" height="1" fill="rgb(150,150,150)"/>
<rect x="1075.6" y="202.1" width="1.5" height="1.5" fill="rgb(105,105,105)"/>
<rect x="1152.6" y="198.6" width="1" height="1.5" fill="rgb(105,105,105)"/>
<rect x="1061.8" y="210.6" width="2" height="1" fill="rgb(125,125,125)"/>
<rect x="1134.3" y="194.8" width="1" height="1.5" fill="rgb(125,125,125)"/>
<rect x="1127.6" y="208.6" width="1" height="1" fill="rgb(220,220,220)"/>
<rect x="1119.4" y="209.6" width="1.5" height="1" fill="rgb(150,150,150)"/>
<rect x="1105.8" y="236.0" width="1" height="1" fill="rgb(210,210,210)"/>
<rect x="1148.1" y="202.4" width="1" height="1" fill="rgb(125,125,125)"/>
<rect x="1232.6" y="208.4" width="1" height="1.5" fill="rgb(210,210,210)"/>
<rect x="1054.1" y="201.3" width="1" height="1.5" fill="rgb(105,105,105)"/>
<rect x="1180.5" y="227.7" width="1" height="1" fill="rgb(85,85,85)"/>
<rect x="1170.0" y="215.8" width="2" height="1" fill="rgb(210,210,210)"/>
<rect x="1133.0" y="225.3" width="1.5" height="1" fill="rgb(150,150,150)"/>
<rect x="1105.2" y="202.7" width="2" height="1" fill="rgb(85,85,85)"/>
<rect x="1184.3" y="222.4" width="2" height="1.5" fill="rgb(105,105,105)"/>
<rect x="1092.6" y="186.5" width="2" height="1.5" fill="rgb(200,200,200)"/>
<rect x="1186.5" y="213.2" width="2" height="1" fill="rgb(220,220,220)"/>
<rect x="1074.9" y="188.5" width="1" height="1" fill="rgb(140,140,140)"/>
<rect x="1216.3" y="200.6" width="2" height="1" fill="rgb(200,200,200)"/>
<rect x="1143.4" y="220.4" width="2" height="1" fill="rgb(85,85,85)"/>
<rect x="1104.0" y="217.1" width="1" height="1.5" fill="rgb(125,125,125)"/>
<rect x="1134.5" y="200.9" width="2" height="1" fill="rgb(85,85,85)"/>
<rect x="1116.2" y="202.9" width="1.5" height="1" fill="rgb(125,125,125)"/>
<rect x="1176.5" y="192.1" width="2" height="1.5" fill="rgb(85,85,85)"/>
<rect x="1176.9" y="190.1" width="1" height="1.5" fill="rgb(105,105,105)"/>
<rect x="1049.9" y="207.1" width="1.5" height="1" fill="rgb(220,220,220)"/>
<rect x="1046.4" y="204.9" width="1" height="1.5" fill="rgb(85,85,85)"/>
<rect x="1117.6" y="226.0" width="2" height="1" fill="rgb(210,210,210)"/>
<rect x="1196.5" y="197.4" width="1.5" height="1" fill="rgb(220,220,220)"/>
<rect x="1048.5" y="198.3" width="1" height="1" fill="rgb(85,85,85)"/>
<rect x="1116.5" y="185.4" width="1" height="1" fill="rgb(125,125,125)"/>
<rect x="1161.7" y="201.1" width="2" height="1" fill="rgb(85,85,85)"/>
<rect x="1101.4" y="227.4" width="1.5" height="1" fill="rgb(140,140,140)"/>
<rect x="1202.8" y="211.4" width="1" height="1" fill="rgb(210,210,210)"/>
<rect x="1097.3" y="178.7" width="1.5" height="1" fill="rgb(125,125,125)"/>
<rect x="1140.1" y="193.4" width="2" height="1" fill="rgb(140,140,140)"/>
<rect x="1078.0" y="217.2" width="1.5" height="1" fill="rgb(105,105,105)"/>
<rect x="1083.5" y="188.2" width="2" height="1" fill="rgb(220,220,220)"/>
<rect x="1114.2" y="206.0" width="2" height="1" fill="rgb(200,200,200)"/>
<rect x="1145.1" y="230.3" width="1" height="1" fill="rgb(200,200,200)"/>
<rect x="1152.5" y="207.8" width="1" height="1.5" fill="rgb(140,140,140)"/>
<rect x="1206.9" y="217.1" width="1.5" height="1.5" fill="rgb(150,150,150)"/>
<rect x="1048.8" y="198.0" width="1" height="1" fill="rgb(85,85,85)"/>
<rect x="1199.1" y="219.3" width="1.5" height="1" fill="rgb(85,85,85)"/>
<rect x="1129.9" y="183.7" width="1.5" height="1" fill="rgb(85,85,85)"/>
<rect x="1083.0" y="197.9" width="2" height="1.5" fill="rgb(105,105,105)"/>
<rect x="1067.9" y="192.8" width="1" height="1.5" fill="rgb(125,125,125)"/>
<rect x="1080.8" y="218.3" width="2" height="1.5" fill="rgb(200,200,200)"/>
<rect x="1244.6" y="208.1" width="2" height="1" fill="rgb(140,140,140)"/>
<rect x="1168.2" y="230.0" width="1.5" height="1" fill="rgb(210,210,210)"/>
<rect x="1079.7" y="202.7" width="1" height="1" fill="rgb(125,125,125)"/>
<rect x="1198.4" y="198.7" width="2" height="1" fill="rgb(210,210,210)"/>
<rect x="1169.3" y="230.3" width="1" height="1" fill="rgb(140,140,140)"/>
<rect x="1147.2" y="185.7" width="2" height="1" fill="rgb(85,85,85)"/>
<rect x="1143.9" y="221.7" width="1" height="1" fill="rgb(220,220,220)"/>
<rect x="1140.0" y="213.4" width="1.5" height="1" fill="rgb(85,85,85)"/>
<rect x="1096.6" y="184.0" width="1" height="1" fill="rgb(105,105,105)"/>
<rect x="1214.8" y="213.7" width="1" height="1" fill="rgb(200,200,200)"/>
<rect x="1160.7" y="197.2" width="2" height="1.5" fill="rgb(140,140,140)"/>
<rect x="1182.7" y="197.5" width="2" height="1" fill="rgb(105,105,105)"/>
<rect x="1139.8" y="218.9" width="2" height="1" fill="rgb(85,85,85)"/>
<rect x="1030.4" y="204.8" width="1" height="1" fill="rgb(210,210,210)"/>
<rect x="1147.5" y="206.7" width="1" height="1" fill="rgb(210,210,210)"/>
<rect x="1168.3" y="198.8" width="1" height="1.5" fill="rgb(200,200,200)"/>
<rect x="1152.4" y="217.0" width="2" height="1.5" fill="rgb(105,105,105)"/>
<rect x="1159.5" y="228.8" width="1" height="1" fill="rgb(220,220,220)"/>
<rect x="1061.6" y="189.3" width="1" height="1" fill="rgb(200,200,200)"/>
<rect x="1081.6" y="219.9" width="2" height="1.5" fill="rgb(140,140,140)"/>
<rect x="1146.8" y="192.8" width="2" height="1.5" fill="rgb(85,85,85)"/>
<rect x="1079.6" y="195.8" width="1" height="1" fill="rgb(150,150,150)"/>
<rect x="1135.0" y="198.9" width="1" height="1.5" fill="rgb(210,210,210)"/>
<rect x="1175.9" y="226.3" width="2" height="1" fill="rgb(125,125,125)"/>
<rect x="1147.5" y="182.4" width="1" height="1" fill="rgb(125,125,125)"/>
<rect x="1106.9" y="192.9" width="1" height="1" fill="rgb(85,85,85)"/>
<rect x="1206.4" y="209.7" width="1.5" height="1.5" fill="rgb(140,140,140)"/>
<rect x="1151.9" y="207.7" width="1" height="1" fill="rgb(150,150,150)"/>
<rect x="1042.8" y="199.8" width="1.5" height="1.5" fill="rgb(85,85,85)"/>
<rect x="1139.2" y="213.6" width="1.5" height="1" fill="rgb(125,125,125)"/>
<rect x="1120.0" y="208.6" width="2" height="1" fill="rgb(85,85,85)"/>
<rect x="1077.8" y="196.9" width="1" height="1" fill="rgb(105,105,105)"/>
<rect x="1059.4" y="221.9" width="1.5" height="1" fill="rgb(220,220,220)"/>
<rect x="1150.5" y="197.2" width="2" height="1" fill="rgb(140,140,140)"/>
<rect x="1137.9" y="221.8" width="1.5" height="1" fill="rgb(105,105,105)"/>
<rect x="1137.3" y="192.4" width="2" height="1" fill="rgb(125,125,125)"/>
<rect x="1104.0" y="229.0" width="2" height="1" fill="rgb(150,150,150)"/>
<rect x="1106.8" y="178.3" width="1.5" height="1.5" fill="rgb(105,105,105)"/>
<rect x="1062.7" y="188.7" width="2" height="1.5" fill="rgb(220,220,220)"/>
<rect x="1112.3" y="212.6" width="1" height="1" fill="rgb(140,140,140)"/>
<rect x="1102.8" y="199.4" width="2" height="1" fill="rgb(200,200,200)"/>
<rect x="1064.0" y="200.6" width="2" height="1.5" fill="rgb(210,210,210)"/>
<rect x="1134.3" y="192.9" width="1.5" height="1" fill="rgb(210,210,210)"/>
<rect x="1123.7" y="203.1" width="1.5" height="1.5" fill="rgb(125,125,125)"/>
<rect x="1163.7" y="191.0" width="1" height="1" fill="rgb(220,220,220)"/>
<rect x="1053.3" y="218.4" width="2" height="1" fill="rgb(140,140,140)"/>
<rect x="1163.6" y="202.2" width="1" height="1" fill="rgb(105,105,105)"/>
<rect x="1113.5" y="218.6" width="1.5" height="1.5" fill="rgb(220,220,220)"/>
<rect x="1150.5" y="229.4" width="1" height="1.5" fill="rgb(125,125,125)"/>
<rect x="1074.1" y="204.9" width="1.5" height="1" fill="rgb(150,150,150)"/>
<rect x="1155.8" y="182.3" width="1.5" height="1" fill="rgb(200,200,200)"/>
<rect x="1057.2" y="217.9" width="1" height="1" fill="rgb(220,220,220)"/>
<rect x="1114.5" y="175.6" width="1.5" height="1" fill="rgb(150,150,150)"/>
<rect x="1167.4" y="217.6" width="1.5" height="1" fill="rgb(85,85,85)"/>
<rect x="1177.8" y="224.2" width="1" height="1.5" fill="rgb(85,85,85)"/>
<rect x="1222.6" y="205.0" width="2" height="1" fill="rgb(140,140,140)"/>
<rect x="1169.1" y="199.0" width="1" height="1" fill="rgb(85,85,85)"/>
<rect x="1163.3" y="212.5" width="1" height="1" fill="rgb(105,105,105)"/>
<rect x="1092.1" y="210.0" width="1" height="1.5" fill="rgb(200,200,200)"/>
<rect x="1090.3" y="227.5" width="1.5" height="1" fill="rgb(125,125,125)"/>
<rect x="1180.5" y="198.3" width="1" height="1" fill="rgb(125,125,125)"/>
<rect x="1067.6" y="192.8" width="1" height="1.5" fill="rgb(140,140,140)"/>
<rect x="1186.1" y="200.2" width="1" height="1" fill="rgb(210,210,210)"/>
<rect x="1099.2" y="215.8" width="1" height="1.5" fill="rgb(85,85,85)"/>
<rect x="1106.0" y="184.2" width="1" height="1" fill="rgb(210,210,210)"/>
<rect x="1080.1" y="189.8" width="2" height="1.5" fill="rgb(150,150,150)"/>
<rect x="1149.6" y="211.2" width="1.5" height="1" fill="rgb(210,210,210)"/>
<rect x="1094.4" y="196.5" width="1" height="1" fill="rgb(200,200,200)"/>
<rect x="1048.8" y="217.6" width="2" height="1.5" fill="rgb(220,220,220)"/>
<rect x="1160.9" y="194.5" width="2" height="1" fill="rgb(150,150,150)"/>
<rect x="1103.0" y="182.6" width="1" height="1" fill="rgb(220,220,220)"/>
<rect x="1019.8" y="202.2" width="1" height="1" fill="rgb(85,85,85)"/>
<rect x="1079.4" y="186.1" width="1.5" height="1.5" fill="rgb(140,140,140)"/>
<rect x="1126.4" y="231.1" width="1" height="1" fill="rgb(85,85,85)"/>
<rect x="1064.2" y="210.6" width="1" height="1" fill="rgb(210,210,210)"/>
<rect x="1008.5" y="205.4" width="1" height="1" fill="rgb(200,200,200)"/>
<rect x="1082.4" y="205.9" width="1" height="1.5" fill="rgb(125,125,125)"/>
<rect x="1067.6" y="210.0" width="1.5" height="1" fill="rgb(125,125,125)"/>
<rect x="1078.5" y="206.6" width="1" height="1" fill="rgb(140,140,140)"/>
<rect x="1180.7" y="208.4" width="1" height="1.5" fill="rgb(200,200,200)"/>
<rect x="1109.3" y="191.3" width="2" height="1.5" fill="rgb(85,85,85)"/>
<rect x="1050.3" y="212.0" width="1" height="1" fill="rgb(125,125,125)"/>
<rect x="1199.2" y="193.9" width="1" height="1.5" fill="rgb(85,85,85)"/>
<rect x="1218.2" y="202.0" width="1" height="1.5" fill="rgb(150,150,150)"/>
<rect x="1133.3" y="224.5" width="2" height="1" fill="rgb(220,220,220)"/>
<rect x="1179.4" y="222.1" width="2" height="1.5" fill="rgb(85,85,85)"/>
<rect x="1129.9" y="181.6" width="1.5" height="1.5" fill="rgb(200,200,200)"/>
<rect x="1057.4" y="219.0" width="2" height="1" fill="rgb(85,85,85)"/>
<rect x="1137.2" y="238.3" width="1" height="1" fill="rgb(150,150,150)"/>
<rect x="1125.9" y="212.4" width="2" height="1.5" fill="rgb(125,125,125)"/>
<rect x="1141.6" y="224.2" width="1.5" height="1.5" fill="rgb(220,220,220)"/>
<rect x="1105.6" y="181.5" width="1" height="1" fill="rgb(150,150,150)"/>
<rect x="1210.9" y="210.5" width="2" height="1.5" fill="rgb(125,125,125)"/>
<rect x="1165.0" y="184.8" width="2" height="1.5" fill="rgb(220,220,220)"/>
<rect x="1140.5" y="225.7" width="1" height="1.5" fill="rgb(140,140,140)"/>
<rect x="1057.7" y="212.3" width="1" height="1" fill="rgb(125,125,125)"/>
<rect x="1208.3" y="203.7" width="2" height="1" fill="rgb(200,200,200)"/>
<rect x="1070.7" y="217.7" width="2" height="1" fill="rgb(210,210,210)"/>
<rect x="1188.3" y="217.0" width="1" height="1" fill="rgb(140,140,140)"/>
<rect x="1087.3" y="228.2" width="1.5" height="1.5" fill="rgb(140,140,140)"/>
<rect x="1169.3" y="228.5" width="1" height="1" fill="rgb(210,210,210)"/>
<rect x="1206.9" y="213.9" width="1.5" height="1" fill="rgb(125,125,125)"/>
<rect x="1043.1" y="199.6" width="1.5" height="1" fill="rgb(140,140,140)"/>
<rect x="1197.3" y="196.1" width="1" height="1" fill="rgb(210,210,210)"/>
<rect x="1092.3" y="230.1" width="1" height="1.5" fill="rgb(220,220,220)"/>
<rect x="1065.4" y="206.5" width="1" height="1" fill="rgb(85,85,85)"/>
<rect x="1139.6" y="189.1" width="1" height="1" fill="rgb(200,200,200)"/>
<rect x="1152.6" y="199.4" width="1.5" height="1.5" fill="rgb(105,105,105)"/>
<rect x="1119.9" y="238.7" width="1.5" height="1.5" fill="rgb(140,140,140)"/>
<rect x="1092.6" y="186.9" width="1" height="1.5" fill="rgb(200,200,200)"/>
<rect x="1140.8" y="220.6" width="2" height="1.5" fill="rgb(85,85,85)"/>
<rect x="1234.2" y="205.7" width="1" height="1" fill="rgb(140,140,140)"/>
<rect x="1125.3" y="236.8" width="1.5" height="1.5" fill="rgb(220,220,220)"/>
<rect x="1167.9" y="211.8" width="2" height="1" fill="rgb(150,150,150)"/>
<rect x="1237.8" y="207.2" width="1.5" height="1" fill="rgb(200,200,200)"/>
<rect x="1129.6" y="173.4" width="1.5" height="1.5" fill="rgb(200,200,200)"/>
<rect x="1028.0" y="213.0" width="1" height="1" fill="rgb(105,105,105)"/>
<rect x="1116.8" y="229.7" width="1.5" height="1" fill="rgb(125,125,125)"/>
<rect x="1137.5" y="188.1" width="1" height="1" fill="rgb(200,200,200)"/>
<rect x="1094.0" y="181.4" width="1.5" height="1.5" fill="rgb(210,210,210)"/>
<rect x="1198.3" y="192.5" width="2" height="1.5" fill="rgb(105,105,105)"/>
<rect x="1127.5" y="198.1" width="1.5" height="1" fill="rgb(150,150,150)"/>
<rect x="1148.6" y="187.5" width="1" height="1.5" fill="rgb(220,220,220)"/>
<rect x="1184.0" y="225.8" width="2" height="1" fill="rgb(140,140,140)"/>
<rect x="1102.9" y="179.4" width="1" height="1" fill="rgb(85,85,85)"/>
<rect x="1059.8" y="214.2" width="1" height="1" fill="rgb(220,220,220)"/>
<rect x="1069.7" y="188.0" width="2" height="2.5" fill="rgb(45,45,45)"/>
<rect x="1126.3" y="179.2" width="2" height="1.5" fill="rgb(55,55,55)"/>
<rect x="1021.9" y="210.0" width="3.5" height="2" fill="rgb(80,80,80)"/>
<rect x="1076.9" y="223.0" width="2" height="2.5" fill="rgb(65,65,65)"/>
<rect x="1183.2" y="208.4" width="3" height="2.5" fill="rgb(45,45,45)"/>
<rect x="1169.5" y="188.2" width="2" height="1.5" fill="rgb(45,45,45)"/>
<rect x="1155.8" y="222.2" width="3" height="2" fill="rgb(65,65,65)"/>
<rect x="1200.0" y="201.5" width="3.5" height="1.5" fill="rgb(55,55,55)"/>
<rect x="1064.7" y="193.2" width="2" height="1.5" fill="rgb(45,45,45)"/>
<rect x="1089.8" y="224.9" width="2" height="2.5" fill="rgb(55,55,55)"/>
<rect x="1172.0" y="212.3" width="3.5" height="1.5" fill="rgb(45,45,45)"/>
<rect x="1196.0" y="210.1" width="2" height="2.5" fill="rgb(80,80,80)"/>
<rect x="1150.5" y="214.5" width="3" height="1.5" fill="rgb(45,45,45)"/>
<rect x="1226.4" y="206.9" width="2" height="1.5" fill="rgb(55,55,55)"/>
<rect x="1190.2" y="204.3" width="3.5" height="1.5" fill="rgb(55,55,55)"/>
<rect x="1163.2" y="185.3" width="3" height="1.5" fill="rgb(55,55,55)"/>
<rect x="1135.5" y="212.2" width="2" height="2" fill="rgb(45,45,45)"/>
<rect x="1148.8" y="201.7" width="3" height="2.5" fill="rgb(45,45,45)"/>
<rect x="1078.3" y="199.7" width="3" height="2.5" fill="rgb(45,45,45)"/>
<rect x="1114.3" y="175.5" width="2" height="2" fill="rgb(45,45,45)"/>
<rect x="1197.4" y="215.8" width="3" height="2.5" fill="rgb(65,65,65)"/>
<rect x="1183.5" y="216.3" width="3" height="2" fill="rgb(80,80,80)"/>
<rect x="1026.0" y="209.8" width="2" height="1.5" fill="rgb(55,55,55)"/>
<rect x="1008.3" y="205.0" width="2" height="2" fill="rgb(80,80,80)"/>
<rect x="1089.7" y="188.4" width="2" height="2.5" fill="rgb(55,55,55)"/>
<rect x="1131.5" y="193.2" width="3.5" height="2.5" fill="rgb(80,80,80)"/>
<rect x="1065.3" y="220.0" width="3.5" height="2" fill="rgb(80,80,80)"/>
<rect x="1086.9" y="213.4" width="3" height="2.5" fill="rgb(65,65,65)"/>
<rect x="1065.7" y="191.2" width="2" height="2" fill="rgb(80,80,80)"/>
<rect x="1050.5" y="210.4" width="3.5" height="2" fill="rgb(80,80,80)"/>
<rect x="1197.0" y="198.4" width="2" height="2.5" fill="rgb(65,65,65)"/>
<rect x="1133.8" y="219.2" width="3.5" height="1.5" fill="rgb(55,55,55)"/>
<rect x="1131.6" y="215.8" width="3" height="1.5" fill="rgb(55,55,55)"/>
<rect x="1143.7" y="232.0" width="3" height="2" fill="rgb(80,80,80)"/>
<rect x="1139.8" y="228.0" width="2" height="2.5" fill="rgb(55,55,55)"/>
<rect x="1089.5" y="212.1" width="2" height="2" fill="rgb(80,80,80)"/>
<rect x="1102.0" y="208.2" width="3" height="2" fill="rgb(80,80,80)"/>
<rect x="1084.8" y="193.2" width="3.5" height="2.5" fill="rgb(55,55,55)"/>
<rect x="1180.6" y="216.4" width="3" height="2.5" fill="rgb(80,80,80)"/>
<rect x="1151.0" y="204.1" width="2" height="2" fill="rgb(45,45,45)"/>
<rect x="1162.7" y="217.9" width="3" height="2.5" fill="rgb(55,55,55)"/>
<rect x="1203.5" y="215.1" width="3.5" height="1.5" fill="rgb(65,65,65)"/>
<rect x="1100.3" y="228.2" width="3.5" height="2" fill="rgb(55,55,55)"/>
<rect x="1052.3" y="191.3" width="3.5" height="2.5" fill="rgb(45,45,45)"/>
<rect x="1128.6" y="209.2" width="3" height="2" fill="rgb(65,65,65)"/>
<rect x="1107.1" y="215.4" width="3" height="1.5" fill="rgb(80,80,80)"/>
<rect x="1132.8" y="220.3" width="3.5" height="1.5" fill="rgb(65,65,65)"/>
<rect x="1091.9" y="209.0" width="3.5" height="2" fill="rgb(45,45,45)"/>
<rect x="1133.7" y="203.3" width="2" height="1.5" fill="rgb(65,65,65)"/>
<rect x="1150.9" y="220.9" width="3.5" height="2" fill="rgb(55,55,55)"/>
<rect x="1120.6" y="200.5" width="3.5" height="2" fill="rgb(55,55,55)"/>
<rect x="1131.0" y="220.4" width="3" height="2.5" fill="rgb(80,80,80)"/>
<rect x="1179.1" y="192.0" width="3" height="2" fill="rgb(80,80,80)"/>
<rect x="1104.1" y="203.1" width="2" height="2.5" fill="rgb(45,45,45)"/>
<rect x="1095.1" y="198.2" width="2" height="2.5" fill="rgb(45,45,45)"/>
<rect x="1067.1" y="204.3" width="3" height="2.5" fill="rgb(65,65,65)"/>
<rect x="1135.6" y="193.1" width="3.5" height="2.5" fill="rgb(45,45,45)"/>
<rect x="1137.6" y="193.8" width="3.5" height="1.5" fill="rgb(80,80,80)"/>
<rect x="1113.9" y="225.9" width="3.5" height="1.5" fill="rgb(45,45,45)"/>
<rect x="1139.4" y="202.5" width="3.5" height="2.5" fill="rgb(55,55,55)"/>
<rect x="1112" y="167.6" width="12.7" height="7.2" rx="0.8" fill="#3e3e41"/>
<rect x="1112" y="173.29999999999998" width="12.7" height="1.5" fill="#1e1e20"/>
<rect x="1126.8" y="171.7" width="16.5" height="8.3" rx="0.8" fill="#3e3e41"/>
<rect x="1126.8" y="178.5" width="16.5" height="1.5" fill="#1e1e20"/>
<rect x="1075" y="188" width="18.7" height="8.5" rx="0.8" fill="#3e3e41"/>
<rect x="1075" y="195.0" width="18.7" height="1.5" fill="#1e1e20"/>
<rect x="1091.6" y="193.4" width="17.6" height="9.3" rx="0.8" fill="#3e3e41"/>
<rect x="1091.6" y="201.20000000000002" width="17.6" height="1.5" fill="#1e1e20"/>
<rect x="1107" y="199.6" width="18.8" height="9.4" rx="0.8" fill="#3e3e41"/>
<rect x="1107" y="207.5" width="18.8" height="1.5" fill="#1e1e20"/>
<rect x="1048.2" y="209" width="26.8" height="13.4" rx="0.8" fill="#3e3e41"/>
<rect x="1048.2" y="220.9" width="26.8" height="1.5" fill="#1e1e20"/>
<rect x="1016" y="202.7" width="13.6" height="8.3" rx="0.8" fill="#3e3e41"/>
<rect x="1016" y="209.5" width="13.6" height="1.5" fill="#1e1e20"/>
<rect x="1032.7" y="205.8" width="17.6" height="8.2" rx="0.8" fill="#3e3e41"/>
<rect x="1032.7" y="212.5" width="17.6" height="1.5" fill="#1e1e20"/>
<rect x="1083.4" y="179" width="12.4" height="7.2" rx="0.8" fill="#3e3e41"/>
<rect x="1083.4" y="184.7" width="12.4" height="1.5" fill="#1e1e20"/>
<rect x="1149.5" y="191.3" width="12.5" height="6.2" rx="0.8" fill="#3e3e41"/>
<rect x="1149.5" y="196.0" width="12.5" height="1.5" fill="#1e1e20"/>
<rect x="1172.3" y="193.4" width="16.5" height="6.2" rx="0.8" fill="#3e3e41"/>
<rect x="1172.3" y="198.1" width="16.5" height="1.5" fill="#1e1e20"/>
<rect x="1191" y="197.5" width="8" height="6.3" rx="0.8" fill="#3e3e41"/>
<rect x="1191" y="202.3" width="8" height="1.5" fill="#1e1e20"/>
<rect x="1151.6" y="221.3" width="8.4" height="4.2" rx="0.8" fill="#3e3e41"/>
<rect x="1151.6" y="224.0" width="8.4" height="1.5" fill="#1e1e20"/>
<rect x="1084.4" y="211" width="24.8" height="16.5" fill="#e4e2de"/>
<rect x="1086" y="213" width="21.5" height="3" fill="#f4f3ef"/>
<rect x="1116.5" y="240" width="17" height="33" fill="#1f1f21"/>
<ellipse cx="1125" cy="273" rx="8.5" ry="2.5" fill="#1f1f21"/>
<polygon points="1110.5,242 1125,246.5 1139.5,242 1139.5,246 1125,250.5 1110.5,246" fill="#c9a24a"/>
<polygon points="1003,204 1014,207.5 1014,212 1003,208.5" fill="#c9a24a"/>
<polygon points="1233,209 1249,204 1249,208.5 1233,213.5" fill="#c9a24a"/>
<rect x="1003.0" y="198.5" width="17" height="6.5" fill="#38383a"/>
<ellipse cx="1011.5" cy="205.0" rx="8.5" ry="2.5" fill="#38383a"/>
<ellipse cx="1011.5" cy="198.5" rx="8.5" ry="4" fill="#48484a"/>
<ellipse cx="1011.5" cy="198.5" rx="4" ry="2" fill="#1a1a1c"/>
<rect x="1116.5" y="236.5" width="17" height="6.5" fill="#38383a"/>
<ellipse cx="1125" cy="243.0" rx="8.5" ry="2.5" fill="#38383a"/>
<ellipse cx="1125" cy="236.5" rx="8.5" ry="4" fill="#48484a"/>
<ellipse cx="1125" cy="236.5" rx="4" ry="2" fill="#1a1a1c"/>
<rect x="1231.5" y="198.5" width="17" height="6.5" fill="#38383a"/>
<ellipse cx="1240" cy="205.0" rx="8.5" ry="2.5" fill="#38383a"/>
<ellipse cx="1240" cy="198.5" rx="8.5" ry="4" fill="#48484a"/>
<ellipse cx="1240" cy="198.5" rx="4" ry="2" fill="#1a1a1c"/>
<rect x="1117.5" y="164.5" width="17" height="6.5" fill="#38383a"/>
<ellipse cx="1126" cy="171.0" rx="8.5" ry="2.5" fill="#38383a"/>
<ellipse cx="1126" cy="164.5" rx="8.5" ry="4" fill="#48484a"/>
<ellipse cx="1126" cy="164.5" rx="4" ry="2" fill="#1a1a1c"/>
<polygon points="1012,212.5 1035.8,219.3 1035.8,240 1012,232.5" fill="#52ad62"/>
<polygon points="1036.9,220.3 1070,230 1071,251.3 1036.9,241" fill="#52ad62"/>
<polygon points="1014.5,216.225 1019.5,217.725 1019.5,230.225 1014.5,228.725" fill="#2f7d43"/>
<polygon points="1021.5,218.255 1026.5,219.755 1026.5,232.255 1021.5,230.755" fill="#2f7d43"/>
<polygon points="1028.5,220.285 1033.5,221.785 1033.5,234.285 1028.5,232.785" fill="#2f7d43"/>
<polygon points="1039.5,223.475 1044.5,224.975 1044.5,237.475 1039.5,235.975" fill="#2f7d43"/>
<polygon points="1047.5,225.795 1052.5,227.295 1052.5,239.795 1047.5,238.295" fill="#2f7d43"/>
<polygon points="1055.5,228.115 1060.5,229.615 1060.5,242.115 1055.5,240.615" fill="#2f7d43"/>
<polygon points="1063,230.29 1068,231.79 1068,244.29 1063,242.79" fill="#2f7d43"/>
<polygon points="1069,233.5 1115.6,246.3 1115.6,260 1072,248.3" fill="#dc3b2b"/>
<rect x="1071.2" y="236.5" width="2" height="2" fill="#a8261a"/>
<rect x="1071.9" y="240.1" width="2" height="2" fill="#a8261a"/>
<rect x="1072.6" y="243.8" width="2" height="2" fill="#a8261a"/>
<rect x="1076.3" y="237.8" width="2" height="2" fill="#a8261a"/>
<rect x="1076.9" y="241.5" width="2" height="2" fill="#a8261a"/>
<rect x="1077.6" y="245.2" width="2" height="2" fill="#a8261a"/>
<rect x="1081.4" y="239.2" width="2" height="2" fill="#a8261a"/>
<rect x="1082.0" y="242.9" width="2" height="2" fill="#a8261a"/>
<rect x="1082.5" y="246.5" width="2" height="2" fill="#a8261a"/>
<rect x="1086.5" y="240.6" width="2" height="2" fill="#a8261a"/>
<rect x="1087.0" y="244.2" width="2" height="2" fill="#a8261a"/>
<rect x="1087.4" y="247.8" width="2" height="2" fill="#a8261a"/>
<rect x="1091.6" y="242.0" width="2" height="2" fill="#a8261a"/>
<rect x="1092.0" y="245.6" width="2" height="2" fill="#a8261a"/>
<rect x="1092.4" y="249.2" width="2" height="2" fill="#a8261a"/>
<rect x="1096.7" y="243.4" width="2" height="2" fill="#a8261a"/>
<rect x="1097.0" y="247.0" width="2" height="2" fill="#a8261a"/>
<rect x="1097.3" y="250.5" width="2" height="2" fill="#a8261a"/>
<rect x="1101.8" y="244.8" width="2" height="2" fill="#a8261a"/>
<rect x="1102.0" y="248.3" width="2" height="2" fill="#a8261a"/>
<rect x="1102.3" y="251.8" width="2" height="2" fill="#a8261a"/>
<rect x="1106.9" y="246.2" width="2" height="2" fill="#a8261a"/>
<rect x="1107.1" y="249.7" width="2" height="2" fill="#a8261a"/>
<rect x="1107.2" y="253.2" width="2" height="2" fill="#a8261a"/>
<rect x="1112.0" y="247.6" width="2" height="2" fill="#a8261a"/>
<rect x="1112.1" y="251.1" width="2" height="2" fill="#a8261a"/>
<rect x="1112.1" y="254.5" width="2" height="2" fill="#a8261a"/>
<polygon points="1134.7,244.4 1165.2,238.5 1165.2,252.2 1134.7,260" fill="#dc3b2b"/>
<rect x="1136.2" y="246.3" width="2" height="2" fill="#a8261a"/>
<rect x="1136.2" y="250.2" width="2" height="2" fill="#a8261a"/>
<rect x="1136.2" y="254.0" width="2" height="2" fill="#a8261a"/>
<rect x="1141.3" y="245.3" width="2" height="2" fill="#a8261a"/>
<rect x="1141.3" y="249.0" width="2" height="2" fill="#a8261a"/>
<rect x="1141.3" y="252.8" width="2" height="2" fill="#a8261a"/>
<rect x="1146.4" y="244.2" width="2" height="2" fill="#a8261a"/>
<rect x="1146.4" y="247.9" width="2" height="2" fill="#a8261a"/>
<rect x="1146.4" y="251.6" width="2" height="2" fill="#a8261a"/>
<rect x="1151.5" y="243.1" width="2" height="2" fill="#a8261a"/>
<rect x="1151.5" y="246.8" width="2" height="2" fill="#a8261a"/>
<rect x="1151.5" y="250.4" width="2" height="2" fill="#a8261a"/>
<rect x="1156.6" y="242.1" width="2" height="2" fill="#a8261a"/>
<rect x="1156.6" y="245.6" width="2" height="2" fill="#a8261a"/>
<rect x="1156.6" y="249.2" width="2" height="2" fill="#a8261a"/>
<rect x="1161.7" y="241.0" width="2" height="2" fill="#a8261a"/>
<rect x="1161.7" y="244.5" width="2" height="2" fill="#a8261a"/>
<rect x="1161.7" y="248.0" width="2" height="2" fill="#a8261a"/>
<polygon points="1201.6,225.7 1238.9,214.9 1238.9,226.7 1201.6,236.5" fill="#dc3b2b"/>
<rect x="1203.7" y="226.2" width="2" height="2" fill="#a8261a"/>
<rect x="1203.7" y="228.9" width="2" height="2" fill="#a8261a"/>
<rect x="1203.7" y="231.6" width="2" height="2" fill="#a8261a"/>
<rect x="1209.9" y="224.4" width="2" height="2" fill="#a8261a"/>
<rect x="1209.9" y="227.2" width="2" height="2" fill="#a8261a"/>
<rect x="1209.9" y="230.0" width="2" height="2" fill="#a8261a"/>
<rect x="1216.1" y="222.7" width="2" height="2" fill="#a8261a"/>
<rect x="1216.1" y="225.5" width="2" height="2" fill="#a8261a"/>
<rect x="1216.1" y="228.3" width="2" height="2" fill="#a8261a"/>
<rect x="1222.4" y="220.9" width="2" height="2" fill="#a8261a"/>
<rect x="1222.4" y="223.8" width="2" height="2" fill="#a8261a"/>
<rect x="1222.4" y="226.6" width="2" height="2" fill="#a8261a"/>
<rect x="1228.6" y="219.1" width="2" height="2" fill="#a8261a"/>
<rect x="1228.6" y="222.0" width="2" height="2" fill="#a8261a"/>
<rect x="1228.6" y="224.9" width="2" height="2" fill="#a8261a"/>
<rect x="1234.8" y="217.4" width="2" height="2" fill="#a8261a"/>
<rect x="1234.8" y="220.3" width="2" height="2" fill="#a8261a"/>
<rect x="1234.8" y="223.2" width="2" height="2" fill="#a8261a"/>
<path d="M93.74 100.85 L94.37 99.83 L96.89 100.88 L96.62 102.04 L97.66 103.08 L98.82 102.81 L99.87 105.33 L98.85 105.96 L98.85 107.44 L99.87 108.07 L98.82 110.59 L97.66 110.32 L96.62 111.36 L96.89 112.52 L94.37 113.57 L93.74 112.55 L92.26 112.55 L91.63 113.57 L89.11 112.52 L89.38 111.36 L88.34 110.32 L87.18 110.59 L86.13 108.07 L87.15 107.44 L87.15 105.96 L86.13 105.33 L87.18 102.81 L88.34 103.08 L89.38 102.04 L89.11 100.88 L91.63 99.83 L92.26 100.85 Z" fill="#8f9192"/>
<path d="M89.20 106.70 a3.80 3.80 0 1 0 7.60 0 a3.80 3.80 0 1 0 -7.60 0 Z M90.70 106.70 a2.30 2.30 0 1 0 4.60 0 a2.30 2.30 0 1 0 -4.60 0 Z" fill="#535b5e" fill-rule="evenodd"/>
<path d="M100.92 96.05 L101.42 95.36 L102.61 96.05 L102.26 96.83 L102.78 97.73 L103.63 97.81 L103.63 99.19 L102.78 99.27 L102.26 100.17 L102.61 100.95 L101.42 101.64 L100.92 100.95 L99.88 100.95 L99.38 101.64 L98.19 100.95 L98.54 100.17 L98.02 99.27 L97.17 99.19 L97.17 97.81 L98.02 97.73 L98.54 96.83 L98.19 96.05 L99.38 95.36 L99.88 96.05 Z" fill="#8f9192"/>
<circle cx="100.4" cy="98.5" r="1.1" fill="#535b5e"/>
<polygon points="102.92,128.00 85.40,132.22 90.30,134.87 91.18,138.02 91.36,140.98 93.37,138.84 96.85,141.80" fill="#8f9192"/><polygon points="98.85,131.09 90.65,135.18 91.12,138.08 92.60,135.94" fill="#535b5e"/>
<path d="M86.3 164 L94.3 157 L102.3 164" fill="none" stroke="#8f9192" stroke-width="2" stroke-linejoin="miter"/><rect x="97.6" y="156" width="2.4" height="5" fill="#8f9192"/><path d="M88.3 162.5 V172.6 H100 V162.5" fill="none" stroke="#8f9192" stroke-width="2"/><rect x="91.8" y="167" width="4.9" height="6.6" fill="#8f9192"/>
<circle cx="93.9" cy="194.75" r="9" fill="#8f9192"/><path d="M90.8 191.1 A4.8 4.8 0 1 0 97.0 191.1" fill="none" stroke="#535b5e" stroke-width="1.6" stroke-linecap="round"/><line x1="94.1" y1="189.6" x2="94.1" y2="194.6" stroke="#535b5e" stroke-width="1.7" stroke-linecap="round"/>
<rect x="85.6" y="216.6" width="16.8" height="16.6" fill="none" stroke="#8f9192" stroke-width="1.3"/><rect x="91.1" y="219.6" width="5.9" height="4.2" fill="#8f9192"/><rect x="91.6" y="225" width="4.9" height="4.2" fill="none" stroke="#8f9192" stroke-width="1"/>
<path d="M86 247.6 Q94 245.2 102 247.6 V254.5 Q101.5 259.5 94 263.4 Q86.5 259.5 86 254.5 Z" fill="#8f9192"/><path d="M90.2 254.6 L93.4 257.6 L98.7 252" fill="none" stroke="#535b5e" stroke-width="2.1"/>
<line x1="94.7" y1="281.8" x2="89.4" y2="278.4" stroke="#8f9192" stroke-width="0.9"/><circle cx="89.4" cy="278.4" r="1.3" fill="#8f9192"/><line x1="94.7" y1="281.8" x2="100.4" y2="278.5" stroke="#8f9192" stroke-width="0.9"/><circle cx="100.4" cy="278.5" r="1.5" fill="#8f9192"/><line x1="94.7" y1="281.8" x2="86.5" y2="284" stroke="#8f9192" stroke-width="0.9"/><circle cx="86.5" cy="284" r="1.6" fill="#8f9192"/><line x1="94.7" y1="281.8" x2="101.6" y2="286.7" stroke="#8f9192" stroke-width="0.9"/><circle cx="101.6" cy="286.7" r="1.6" fill="#8f9192"/><line x1="94.7" y1="281.8" x2="91.2" y2="291.2" stroke="#8f9192" stroke-width="0.9"/><circle cx="91.2" cy="291.2" r="1.5" fill="#8f9192"/><circle cx="94.7" cy="281.8" r="2.6" fill="#8f9192"/>
<rect x="89.4" y="306.6" width="10.2" height="16.6" fill="none" stroke="#8f9192" stroke-width="1.2"/><rect x="91" y="308" width="7" height="13.3" fill="#8f9192"/><rect x="85.2" y="309.5" width="4" height="1.3" fill="#8f9192"/><rect x="99.8" y="309.5" width="3.6" height="1.3" fill="#8f9192"/><rect x="85.2" y="312.6" width="4" height="1.3" fill="#8f9192"/><rect x="99.8" y="312.6" width="3.6" height="1.3" fill="#8f9192"/><rect x="85.2" y="315.7" width="4" height="1.3" fill="#8f9192"/><rect x="99.8" y="315.7" width="3.6" height="1.3" fill="#8f9192"/><rect x="85.2" y="318.8" width="4" height="1.3" fill="#8f9192"/><rect x="99.8" y="318.8" width="3.6" height="1.3" fill="#8f9192"/><rect x="93.5" y="319" width="4" height="0.8" fill="#535b5e"/>
<path d="M821.84 143.17 L822.83 141.51 L826.76 143.14 L826.28 145.01 L827.89 146.62 L829.76 146.14 L831.39 150.07 L829.73 151.06 L829.73 153.34 L831.39 154.33 L829.76 158.26 L827.89 157.78 L826.28 159.39 L826.76 161.26 L822.83 162.89 L821.84 161.23 L819.56 161.23 L818.57 162.89 L814.64 161.26 L815.12 159.39 L813.51 157.78 L811.64 158.26 L810.01 154.33 L811.67 153.34 L811.67 151.06 L810.01 150.07 L811.64 146.14 L813.51 146.62 L815.12 145.01 L814.64 143.14 L818.57 141.51 L819.56 143.17 Z" fill="#979797"/>
<path d="M814.40 152.20 a6.30 6.30 0 1 0 12.60 0 a6.30 6.30 0 1 0 -12.60 0 Z M817.50 152.20 a3.20 3.20 0 1 0 6.40 0 a3.20 3.20 0 1 0 -6.40 0 Z" fill="#42474a" fill-rule="evenodd"/>
<circle cx="820.7" cy="152.2" r="1.4" fill="#42474a"/>
<path d="M832.64 134.85 L833.25 133.95 L835.09 134.84 L834.77 135.87 L835.57 136.88 L836.64 136.79 L837.10 138.79 L836.09 139.18 L835.81 140.43 L836.54 141.22 L835.27 142.81 L834.33 142.27 L833.18 142.83 L833.02 143.90 L830.98 143.90 L830.82 142.83 L829.67 142.27 L828.73 142.81 L827.46 141.22 L828.19 140.43 L827.91 139.18 L826.90 138.79 L827.36 136.79 L828.43 136.88 L829.23 135.87 L828.91 134.84 L830.75 133.95 L831.36 134.85 Z" fill="#979797"/>
<circle cx="832.0" cy="138.89999999999998" r="1.8" fill="#42474a"/>
<polygon points="837.90,180.10 808.20,186.80 816.50,191.00 818.00,196.00 818.30,200.70 821.70,197.30 827.60,202.00" fill="#979797"/><polygon points="831.00,185.00 817.10,191.50 817.90,196.10 820.40,192.70" fill="#42474a"/>
<path d="M821.64 228.37 L822.63 226.71 L826.56 228.34 L826.08 230.21 L827.69 231.82 L829.56 231.34 L831.19 235.27 L829.53 236.26 L829.53 238.54 L831.19 239.53 L829.56 243.46 L827.69 242.98 L826.08 244.59 L826.56 246.46 L822.63 248.09 L821.64 246.43 L819.36 246.43 L818.37 248.09 L814.44 246.46 L814.92 244.59 L813.31 242.98 L811.44 243.46 L809.81 239.53 L811.47 238.54 L811.47 236.26 L809.81 235.27 L811.44 231.34 L813.31 231.82 L814.92 230.21 L814.44 228.34 L818.37 226.71 L819.36 228.37 Z" fill="#979797"/>
<path d="M814.20 237.40 a6.30 6.30 0 1 0 12.60 0 a6.30 6.30 0 1 0 -12.60 0 Z M817.30 237.40 a3.20 3.20 0 1 0 6.40 0 a3.20 3.20 0 1 0 -6.40 0 Z" fill="#42474a" fill-rule="evenodd"/>
<circle cx="820.5" cy="237.4" r="1.4" fill="#42474a"/>
<path d="M832.44 220.05 L833.05 219.15 L834.89 220.04 L834.57 221.07 L835.37 222.08 L836.44 221.99 L836.90 223.99 L835.89 224.38 L835.61 225.63 L836.34 226.42 L835.07 228.01 L834.13 227.47 L832.98 228.03 L832.82 229.10 L830.78 229.10 L830.62 228.03 L829.47 227.47 L828.53 228.01 L827.26 226.42 L827.99 225.63 L827.71 224.38 L826.70 223.99 L827.16 221.99 L828.23 222.08 L829.03 221.07 L828.71 220.04 L830.55 219.15 L831.16 220.05 Z" fill="#979797"/>
<circle cx="831.8" cy="224.1" r="1.8" fill="#42474a"/>
<circle cx="823" cy="266.3" r="5.8" fill="#979797"/><rect x="821.3" y="268" width="3.4" height="13" fill="#979797"/><rect x="812" y="276" width="7" height="5" rx="1" fill="#979797"/><rect x="827" y="276" width="7.5" height="5" rx="1" fill="#979797"/><rect x="808" y="280" width="30" height="11" rx="1.2" fill="#979797"/><rect x="810.4" y="282.1" width="25.6" height="1.6" rx="0.8" fill="#42474a"/>
<rect x="372.7" y="305.7" width="26.5" height="26.5" rx="1.5" fill="none" stroke="#979797" stroke-width="3.5"/><polygon points="376.5,309.5 383.5,309.5 376.5,316.5" fill="#979797"/><line x1="379.5" y1="312.5" x2="385.5" y2="318.5" stroke="#979797" stroke-width="3.1"/><polygon points="395.2,328.2 388.2,328.2 395.2,321.2" fill="#979797"/><line x1="386.5" y1="319.5" x2="392.2" y2="325.2" stroke="#979797" stroke-width="3.1"/>
<path d="M559.7 306.3 Q573 301.8 586 306.3 V321.5 Q585 328.5 573 334.2 Q561 328.5 559.7 321.5 Z" fill="#979797"/><path d="M567.1 318.6 L571.8 323.3 L580.4 315" fill="none" stroke="#42474a" stroke-width="3.5"/>
<rect x="746.9" y="304.9" width="28.2" height="28.2" rx="1" fill="none" stroke="#979797" stroke-width="2"/><rect x="755.9" y="309.8" width="10.1" height="9" fill="#979797"/><rect x="756.5" y="318.6" width="8.9" height="8.2" fill="none" stroke="#979797" stroke-width="1.2"/>
<circle cx="44.1" cy="44.7" r="8.9" fill="#8f8f91"/><path d="M38.7 44.5 L42.5 48.3 L49.9 40" fill="none" stroke="#7c7b7f" stroke-width="1.4"/><g transform="translate(60,68) scale(0.3)"><path d="M20 3.2 L16 3.2 Q12.2 3.2 10.9 6.98 L4.5 25.2 Q3.2 29 3.2 33 L3.2 39.3 Q3.2 43.8 7.7 43.8 L52.3 43.8 Q56.8 43.8 56.8 39.3 L56.8 33 Q56.8 29 55.5 25.2 L49.1 6.98 Q47.8 3.2 44 3.2 Z" fill="none" stroke="#3cf8c4" stroke-width="6" stroke-linejoin="round"/><path d="M13 23.1 L58 23.1 L58 28.6 L11 28.6 Z" fill="#3cf8c4"/><rect x="40.4" y="31" width="5.7" height="7" fill="#3cf8c4"/></g>
<g transform="translate(371,21)"><path d="M20 3.2 L16 3.2 Q12.2 3.2 10.9 6.98 L4.5 25.2 Q3.2 29 3.2 33 L3.2 39.3 Q3.2 43.8 7.7 43.8 L52.3 43.8 Q56.8 43.8 56.8 39.3 L56.8 33 Q56.8 29 55.5 25.2 L49.1 6.98 Q47.8 3.2 44 3.2 Z" fill="none" stroke="#3cf8c4" stroke-width="6.4" stroke-linejoin="round"/><path d="M13 23.1 L58 23.1 L58 28.6 L11 28.6 Z" fill="#3cf8c4"/><rect x="40.4" y="32" width="5.7" height="5.8" fill="#3cf8c4"/></g>
</svg>
</body></html>
